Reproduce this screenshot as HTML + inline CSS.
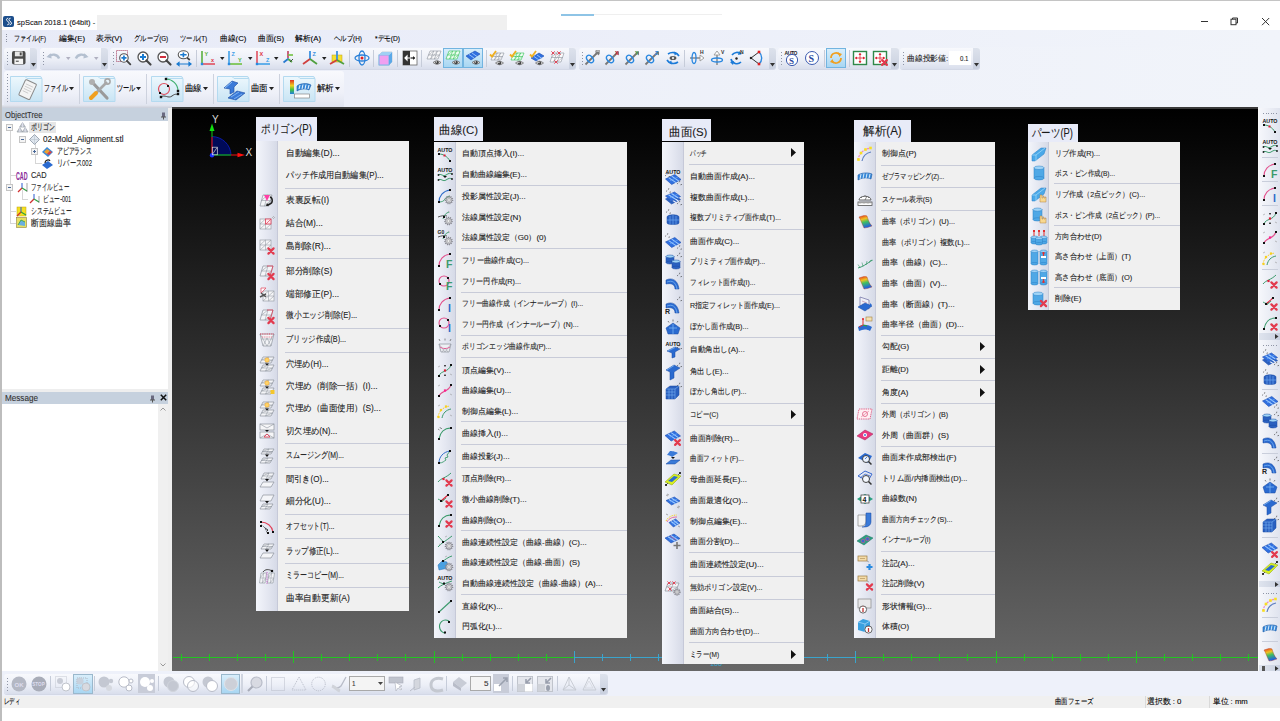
<!DOCTYPE html>
<html><head><meta charset="utf-8"><title>spScan</title>
<style>
*{margin:0;padding:0;box-sizing:border-box}
html,body{width:1280px;height:721px;overflow:hidden;background:#fff;font-family:"Liberation Sans", sans-serif;color:#1a1a1a}
.a{position:absolute}
.t{position:absolute;white-space:nowrap;line-height:1.2;transform-origin:0 50%;color:#000;-webkit-text-stroke:0.1px currentColor}
svg.a{overflow:visible}
</style></head>
<body>
<div class="a" style="left:0px;top:0px;width:1280px;height:721px;background:#fff"></div>
<div class="a" style="left:0px;top:0px;width:1280px;height:1px;background:#c4c4c4"></div>
<div class="a" style="left:0px;top:0px;width:1.5px;height:721px;background:#bdbdbd"></div>
<svg class="a" style="left:3px;top:16px" width="11" height="11" viewBox="0 0 11 11"><rect width="11" height="11" rx="2" fill="#1d4f8c"/><path d="M5.2 2.2C3.6 2.2 3 3.6 4 4.6l1.6 1.6c1 1 .4 2.6-1.3 2.6M7.6 2.2C6 2.2 5.4 3.6 6.4 4.6L8 6.2c1 1 .4 2.6-1.3 2.6" stroke="#fff" stroke-width="1" fill="none"/></svg>
<div class="t" style="left:17px;top:17.5px;font-size:8px;--w:78.17px;color:#111;transform:scaleX(0.9399)">spScan 2018.1 (64bit) -</div>
<div class="a" style="left:97px;top:15px;width:410px;height:15px;background:#f0f0f0"></div>
<div class="a" style="left:561px;top:14px;width:33px;height:1.5px;background:#8ec4e6"></div>
<div class="a" style="left:594px;top:14.2px;width:128px;height:1px;background:#efefef"></div>
<div class="a" style="left:1201px;top:21px;width:7px;height:1px;background:#333"></div>
<svg class="a" style="left:1230px;top:17px" width="9" height="9" viewBox="0 0 9 9"><rect x="1" y="2.2" width="5" height="5.5" fill="none" stroke="#333" stroke-width="1"/><path d="M2.5 2.2V1h5v5H6" fill="none" stroke="#333" stroke-width="1"/></svg>
<svg class="a" style="left:1261px;top:17px" width="9" height="9" viewBox="0 0 9 9"><path d="M1 1l7.2 7.2M8.2 1L1 8.2" stroke="#333" stroke-width="1"/></svg>
<div class="a" style="left:1.5px;top:30px;width:1278.5px;height:17px;background:linear-gradient(90deg,#e8ebf7,#ebeef9 40%,#f1f4fa)"></div>
<div class="a" style="left:6px;top:33.5px;width:1px;height:1px;background:#8a8fa0"></div>
<div class="a" style="left:6px;top:36.0px;width:1px;height:1px;background:#8a8fa0"></div>
<div class="a" style="left:6px;top:38.5px;width:1px;height:1px;background:#8a8fa0"></div>
<div class="a" style="left:6px;top:41.0px;width:1px;height:1px;background:#8a8fa0"></div>
<div class="t" style="left:14px;top:33.7px;font-size:8px;--w:31.92px;;transform:scaleX(0.7561)">ファイル(F)</div>
<div class="t" style="left:58.5px;top:33.7px;font-size:8px;--w:26.02px;;transform:scaleX(0.9756)">編集(E)</div>
<div class="t" style="left:96px;top:33.7px;font-size:8px;--w:26.02px;;transform:scaleX(0.9756)">表示(V)</div>
<div class="t" style="left:133.5px;top:33.7px;font-size:8px;--w:34.22px;;transform:scaleX(0.7855)">グループ(G)</div>
<div class="t" style="left:180px;top:33.7px;font-size:8px;--w:27.12px;;transform:scaleX(0.7925)">ツール(T)</div>
<div class="t" style="left:220px;top:33.7px;font-size:8px;--w:26.44px;;transform:scaleX(0.9753)">曲線(C)</div>
<div class="t" style="left:257.5px;top:33.7px;font-size:8px;--w:26.02px;;transform:scaleX(0.9756)">曲面(S)</div>
<div class="t" style="left:295px;top:33.7px;font-size:8px;--w:26.02px;;transform:scaleX(0.9756)">解析(A)</div>
<div class="t" style="left:333.5px;top:33.7px;font-size:8px;--w:27.96px;;transform:scaleX(0.7964)">ヘルプ(H)</div>
<div class="t" style="left:374.5px;top:33.7px;font-size:8px;--w:25.05px;;transform:scaleX(0.829)">*デモ(D)</div>
<div class="a" style="left:1.5px;top:47px;width:1278.5px;height:61px;background:linear-gradient(90deg,#eaedf8,#edf0f9 40%,#f1f4fa)"></div>
<div class="a" style="left:4px;top:47.5px;width:33px;height:21.5px;background:linear-gradient(#f8f9fd,#eceff7 55%,#d9deec);border-radius:3px;box-shadow:0 1px 0 #d3d8e6"></div>
<div class="a" style="left:7px;top:51.5px;width:1px;height:1px;background:#8f95a6"></div>
<div class="a" style="left:7px;top:54.5px;width:1px;height:1px;background:#8f95a6"></div>
<div class="a" style="left:7px;top:57.5px;width:1px;height:1px;background:#8f95a6"></div>
<div class="a" style="left:7px;top:60.5px;width:1px;height:1px;background:#8f95a6"></div>
<div class="a" style="left:7px;top:63.5px;width:1px;height:1px;background:#8f95a6"></div>
<div class="a" style="left:29.5px;top:47.5px;width:7.5px;height:21.5px;background:linear-gradient(#dde2ec,#c9d0df);border-radius:0 3px 3px 0"></div>
<svg class="a" style="left:30.5px;top:63.0px" width="5" height="4" viewBox="0 0 5 4"><path d="M0 0h5l-2.5 3.5z" fill="#333"/></svg>
<div class="a" style="left:40px;top:47.5px;width:68px;height:21.5px;background:linear-gradient(#f8f9fd,#eceff7 55%,#d9deec);border-radius:3px;box-shadow:0 1px 0 #d3d8e6"></div>
<div class="a" style="left:43px;top:51.5px;width:1px;height:1px;background:#8f95a6"></div>
<div class="a" style="left:43px;top:54.5px;width:1px;height:1px;background:#8f95a6"></div>
<div class="a" style="left:43px;top:57.5px;width:1px;height:1px;background:#8f95a6"></div>
<div class="a" style="left:43px;top:60.5px;width:1px;height:1px;background:#8f95a6"></div>
<div class="a" style="left:43px;top:63.5px;width:1px;height:1px;background:#8f95a6"></div>
<div class="a" style="left:100.5px;top:47.5px;width:7.5px;height:21.5px;background:linear-gradient(#dde2ec,#c9d0df);border-radius:0 3px 3px 0"></div>
<svg class="a" style="left:101.5px;top:63.0px" width="5" height="4" viewBox="0 0 5 4"><path d="M0 0h5l-2.5 3.5z" fill="#333"/></svg>
<div class="a" style="left:110px;top:47.5px;width:466px;height:21.5px;background:linear-gradient(#f8f9fd,#eceff7 55%,#d9deec);border-radius:3px;box-shadow:0 1px 0 #d3d8e6"></div>
<div class="a" style="left:113px;top:51.5px;width:1px;height:1px;background:#8f95a6"></div>
<div class="a" style="left:113px;top:54.5px;width:1px;height:1px;background:#8f95a6"></div>
<div class="a" style="left:113px;top:57.5px;width:1px;height:1px;background:#8f95a6"></div>
<div class="a" style="left:113px;top:60.5px;width:1px;height:1px;background:#8f95a6"></div>
<div class="a" style="left:113px;top:63.5px;width:1px;height:1px;background:#8f95a6"></div>
<div class="a" style="left:568.5px;top:47.5px;width:7.5px;height:21.5px;background:linear-gradient(#dde2ec,#c9d0df);border-radius:0 3px 3px 0"></div>
<svg class="a" style="left:569.5px;top:63.0px" width="5" height="4" viewBox="0 0 5 4"><path d="M0 0h5l-2.5 3.5z" fill="#333"/></svg>
<div class="a" style="left:579px;top:47.5px;width:197px;height:21.5px;background:linear-gradient(#f8f9fd,#eceff7 55%,#d9deec);border-radius:3px;box-shadow:0 1px 0 #d3d8e6"></div>
<div class="a" style="left:582px;top:51.5px;width:1px;height:1px;background:#8f95a6"></div>
<div class="a" style="left:582px;top:54.5px;width:1px;height:1px;background:#8f95a6"></div>
<div class="a" style="left:582px;top:57.5px;width:1px;height:1px;background:#8f95a6"></div>
<div class="a" style="left:582px;top:60.5px;width:1px;height:1px;background:#8f95a6"></div>
<div class="a" style="left:582px;top:63.5px;width:1px;height:1px;background:#8f95a6"></div>
<div class="a" style="left:768.5px;top:47.5px;width:7.5px;height:21.5px;background:linear-gradient(#dde2ec,#c9d0df);border-radius:0 3px 3px 0"></div>
<svg class="a" style="left:769.5px;top:63.0px" width="5" height="4" viewBox="0 0 5 4"><path d="M0 0h5l-2.5 3.5z" fill="#333"/></svg>
<div class="a" style="left:777.5px;top:47.5px;width:121px;height:21.5px;background:linear-gradient(#f8f9fd,#eceff7 55%,#d9deec);border-radius:3px;box-shadow:0 1px 0 #d3d8e6"></div>
<div class="a" style="left:780.5px;top:51.5px;width:1px;height:1px;background:#8f95a6"></div>
<div class="a" style="left:780.5px;top:54.5px;width:1px;height:1px;background:#8f95a6"></div>
<div class="a" style="left:780.5px;top:57.5px;width:1px;height:1px;background:#8f95a6"></div>
<div class="a" style="left:780.5px;top:60.5px;width:1px;height:1px;background:#8f95a6"></div>
<div class="a" style="left:780.5px;top:63.5px;width:1px;height:1px;background:#8f95a6"></div>
<div class="a" style="left:891.0px;top:47.5px;width:7.5px;height:21.5px;background:linear-gradient(#dde2ec,#c9d0df);border-radius:0 3px 3px 0"></div>
<svg class="a" style="left:892.0px;top:63.0px" width="5" height="4" viewBox="0 0 5 4"><path d="M0 0h5l-2.5 3.5z" fill="#333"/></svg>
<div class="a" style="left:900px;top:47.5px;width:80px;height:21.5px;background:linear-gradient(#f8f9fd,#eceff7 55%,#d9deec);border-radius:3px;box-shadow:0 1px 0 #d3d8e6"></div>
<div class="a" style="left:903px;top:51.5px;width:1px;height:1px;background:#8f95a6"></div>
<div class="a" style="left:903px;top:54.5px;width:1px;height:1px;background:#8f95a6"></div>
<div class="a" style="left:903px;top:57.5px;width:1px;height:1px;background:#8f95a6"></div>
<div class="a" style="left:903px;top:60.5px;width:1px;height:1px;background:#8f95a6"></div>
<div class="a" style="left:903px;top:63.5px;width:1px;height:1px;background:#8f95a6"></div>
<div class="a" style="left:972.5px;top:47.5px;width:7.5px;height:21.5px;background:linear-gradient(#dde2ec,#c9d0df);border-radius:0 3px 3px 0"></div>
<svg class="a" style="left:973.5px;top:63.0px" width="5" height="4" viewBox="0 0 5 4"><path d="M0 0h5l-2.5 3.5z" fill="#333"/></svg>
<div class="a" style="left:4px;top:70.5px;width:340px;height:37px;background:linear-gradient(#f8f9fd,#eef0f8 60%,#dfe3ef);border-radius:3px"></div>
<div class="a" style="left:6.5px;top:74px;width:1px;height:1px;background:#8f95a6"></div>
<div class="a" style="left:6.5px;top:77px;width:1px;height:1px;background:#8f95a6"></div>
<div class="a" style="left:6.5px;top:80px;width:1px;height:1px;background:#8f95a6"></div>
<div class="a" style="left:6.5px;top:83px;width:1px;height:1px;background:#8f95a6"></div>
<div class="a" style="left:6.5px;top:86px;width:1px;height:1px;background:#8f95a6"></div>
<div class="a" style="left:6.5px;top:89px;width:1px;height:1px;background:#8f95a6"></div>
<div class="a" style="left:6.5px;top:92px;width:1px;height:1px;background:#8f95a6"></div>
<div class="a" style="left:6.5px;top:95px;width:1px;height:1px;background:#8f95a6"></div>
<div class="a" style="left:6.5px;top:98px;width:1px;height:1px;background:#8f95a6"></div>
<div class="a" style="left:6.5px;top:101px;width:1px;height:1px;background:#8f95a6"></div>
<div class="a" style="left:79px;top:74px;width:1px;height:30px;background:#cdd2de"></div>
<div class="a" style="left:146px;top:74px;width:1px;height:30px;background:#cdd2de"></div>
<div class="a" style="left:212.5px;top:74px;width:1px;height:30px;background:#cdd2de"></div>
<div class="a" style="left:279px;top:74px;width:1px;height:30px;background:#cdd2de"></div>
<div class="a" style="left:10px;top:76px;width:32px;height:26px;background:linear-gradient(#e9f5fc,#cfe7f6);border:1px solid #b2d9f0;border-radius:2px"></div>
<div class="t" style="left:44px;top:83.4px;font-size:8.5px;--w:23.71px;;transform:scaleX(0.6586)">ファイル</div>
<svg class="a" style="left:68.72px;top:87px" width="5" height="3.5" viewBox="0 0 5 3.5"><path d="M0 0h5l-2.5 3.2z" fill="#222"/></svg>
<div class="a" style="left:82.5px;top:76px;width:32px;height:26px;background:linear-gradient(#e9f5fc,#cfe7f6);border:1px solid #b2d9f0;border-radius:2px"></div>
<div class="t" style="left:116.5px;top:83.4px;font-size:8.5px;--w:18.61px;;transform:scaleX(0.6893)">ツール</div>
<svg class="a" style="left:136.12px;top:87px" width="5" height="3.5" viewBox="0 0 5 3.5"><path d="M0 0h5l-2.5 3.2z" fill="#222"/></svg>
<div class="a" style="left:151px;top:76px;width:32px;height:26px;background:linear-gradient(#e9f5fc,#cfe7f6);border:1px solid #b2d9f0;border-radius:2px"></div>
<div class="t" style="left:185px;top:83.4px;font-size:8.5px;--w:17.0px;;transform:scaleX(0.9444)">曲線</div>
<svg class="a" style="left:203.0px;top:87px" width="5" height="3.5" viewBox="0 0 5 3.5"><path d="M0 0h5l-2.5 3.2z" fill="#222"/></svg>
<div class="a" style="left:217px;top:76px;width:32px;height:26px;background:linear-gradient(#e9f5fc,#cfe7f6);border:1px solid #b2d9f0;border-radius:2px"></div>
<div class="t" style="left:251px;top:83.4px;font-size:8.5px;--w:17.0px;;transform:scaleX(0.9444)">曲面</div>
<svg class="a" style="left:269.0px;top:87px" width="5" height="3.5" viewBox="0 0 5 3.5"><path d="M0 0h5l-2.5 3.2z" fill="#222"/></svg>
<div class="a" style="left:282.5px;top:76px;width:32px;height:26px;background:linear-gradient(#e9f5fc,#cfe7f6);border:1px solid #b2d9f0;border-radius:2px"></div>
<div class="t" style="left:316.5px;top:83.4px;font-size:8.5px;--w:17.0px;;transform:scaleX(0.9444)">解析</div>
<svg class="a" style="left:334.5px;top:87px" width="5" height="3.5" viewBox="0 0 5 3.5"><path d="M0 0h5l-2.5 3.2z" fill="#222"/></svg>
<div class="a" style="left:1.5px;top:105px;width:170.5px;height:3px;background:linear-gradient(#e4e7f0,#c9cdd8)"></div>
<div class="a" style="left:172px;top:107px;width:1086px;height:2px;background:#3a3a3a"></div>
<div class="a" style="left:1.5px;top:108px;width:166.5px;height:564px;background:#fff"></div>
<div class="a" style="left:168px;top:108px;width:4px;height:564px;background:#eeeeee"></div>
<div class="a" style="left:1.5px;top:108px;width:166.5px;height:13px;background:#c6d1de"></div>
<div class="t" style="left:4.5px;top:109.6px;font-size:9px;--w:37.5px;color:#333;transform:scaleX(0.8487)">ObjectTree</div>
<svg class="a" style="left:160.5px;top:111.5px" width="5" height="8" viewBox="0 0 5 8"><rect x="1" y="0.5" width="3" height="4.5" fill="#6a6a80"/><rect x="0" y="4.5" width="5" height="1" fill="#555"/><rect x="2" y="5" width="1" height="2.5" fill="#555"/></svg>
<div class="a" style="left:1.5px;top:388.5px;width:166.5px;height:3.5px;background:#eeeeee"></div>
<div class="a" style="left:1.5px;top:392px;width:166.5px;height:12px;background:#c6d1de"></div>
<div class="t" style="left:4.5px;top:392.9px;font-size:9px;--w:33px;color:#333;transform:scaleX(0.9033)">Message</div>
<svg class="a" style="left:149.5px;top:395px" width="5" height="8" viewBox="0 0 5 8"><rect x="1" y="0.5" width="3" height="4.5" fill="#6a6a80"/><rect x="0" y="4.5" width="5" height="1" fill="#555"/><rect x="2" y="5" width="1" height="2.5" fill="#555"/></svg>
<svg class="a" style="left:160px;top:394px" width="7" height="7" viewBox="0 0 7 7"><path d="M0.8 0.8l5.4 5.4M6.2 0.8l-5.4 5.4" stroke="#111" stroke-width="1.5"/></svg>
<div class="a" style="left:158px;top:404px;width:10px;height:268px;background:#f0f0f0"></div>
<svg class="a" style="left:160px;top:407px" width="6" height="4" viewBox="0 0 6 4"><path d="M0.5 3.5L3 1l2.5 2.5" stroke="#999" fill="none"/></svg>
<svg class="a" style="left:160px;top:663px" width="6" height="4" viewBox="0 0 6 4"><path d="M0.5 0.5L3 3l2.5-2.5" stroke="#999" fill="none"/></svg>
<div class="a" style="left:9.5px;top:130px;width:1px;height:93px;background:#d6d6d6"></div>
<div class="a" style="left:9.5px;top:175.4px;width:6px;height:1px;background:#d6d6d6"></div>
<div class="a" style="left:9.5px;top:211px;width:6px;height:1px;background:#d6d6d6"></div>
<div class="a" style="left:9.5px;top:222.7px;width:6px;height:1px;background:#d6d6d6"></div>
<div class="a" style="left:22px;top:142px;width:1px;height:0px;background:#d6d6d6"></div>
<div class="a" style="left:34.5px;top:142px;width:1px;height:21px;background:#d6d6d6"></div>
<div class="a" style="left:34.5px;top:163.2px;width:7px;height:1px;background:#d6d6d6"></div>
<div class="a" style="left:22px;top:190px;width:1px;height:9px;background:#d6d6d6"></div>
<div class="a" style="left:22px;top:198.7px;width:6px;height:1px;background:#d6d6d6"></div>
<svg class="a" style="left:6.0px;top:123.9px" width="7" height="7" viewBox="0 0 7 7"><rect x="0.5" y="0.5" width="6" height="6" fill="#f4f4f4" stroke="#c4c4c4"/><path d="M2 3.5h3" stroke="#4a6a9a"/></svg>
<svg class="a" style="left:18.5px;top:136.0px" width="7" height="7" viewBox="0 0 7 7"><rect x="0.5" y="0.5" width="6" height="6" fill="#f4f4f4" stroke="#c4c4c4"/><path d="M2 3.5h3" stroke="#4a6a9a"/></svg>
<svg class="a" style="left:31.0px;top:148.0px" width="7" height="7" viewBox="0 0 7 7"><rect x="0.5" y="0.5" width="6" height="6" fill="#f4f4f4" stroke="#c4c4c4"/><path d="M2 3.5h3" stroke="#4a6a9a"/><path d="M3.5 2v3" stroke="#4a6a9a"/></svg>
<svg class="a" style="left:6.0px;top:183.5px" width="7" height="7" viewBox="0 0 7 7"><rect x="0.5" y="0.5" width="6" height="6" fill="#f4f4f4" stroke="#c4c4c4"/><path d="M2 3.5h3" stroke="#4a6a9a"/></svg>
<div class="a" style="left:28.8px;top:121.5px;width:27px;height:11px;background:#e6e6e6"></div>
<div class="t" style="left:31px;top:122.04px;font-size:8.6px;--w:24px;color:#222;transform:scaleX(0.6667)">ポリゴン</div>
<div class="t" style="left:43.3px;top:134.34px;font-size:8.6px;--w:80.5px;color:#222;transform:scaleX(0.9467)">02-Mold_Alignment.stl</div>
<div class="t" style="left:56.6px;top:146.34px;font-size:8.6px;--w:35px;color:#222;transform:scaleX(0.6481)">アピアランス</div>
<div class="t" style="left:56.6px;top:158.04px;font-size:8.6px;--w:35px;color:#222;transform:scaleX(0.6952)">リバース002</div>
<div class="t" style="left:31px;top:170.24px;font-size:8.6px;--w:15.6px;color:#222;transform:scaleX(0.8592)">CAD</div>
<div class="t" style="left:31px;top:181.84px;font-size:8.6px;--w:38.4px;color:#222;transform:scaleX(0.6095)">ファイルビュー</div>
<div class="t" style="left:43.3px;top:193.54px;font-size:8.6px;--w:28.1px;color:#222;transform:scaleX(0.6357)">ビュー-001</div>
<div class="t" style="left:31px;top:205.84px;font-size:8.6px;--w:40.7px;color:#222;transform:scaleX(0.646)">システムビュー</div>
<div class="t" style="left:31px;top:217.54px;font-size:8.6px;--w:40px;color:#222;transform:scaleX(0.8889)">断面線曲率</div>
<svg class="a" style="left:16.5px;top:121.5px" width="11" height="11" viewBox="0 0 11 11"><path d="M5.5 0.5l2.8 4.5h-5.6zM2.8 5.5l2.8 4.5H0zM8.2 5.5l2.8 4.5H5.4z" fill="#c8ccd4" stroke="#9aa0a8" stroke-width="0.7"/><path d="M5.5 0.5v4.5M2.8 5.5V10M8.2 5.5V10" stroke="#eef" stroke-width="0.6"/></svg>
<svg class="a" style="left:29px;top:134px" width="11" height="11" viewBox="0 0 11 11"><path d="M5.5 0.5l5 5-5 5-5-5z" fill="#dfe6ee" stroke="#8a96a4" stroke-width="0.8"/><path d="M0.5 5.5h10M5.5 0.5v10" stroke="#b8c2cc" stroke-width="0.6"/></svg>
<svg class="a" style="left:41px;top:146px" width="12" height="11" viewBox="0 0 12 11"><path d="M1 6l5-5 6 5-5 5z" fill="#3a8ad8"/><path d="M3 6l3-3 3 2-3 3z" fill="#f0a030"/><path d="M6 8l3-3 2 1-3 3z" fill="#e04040"/></svg>
<svg class="a" style="left:41px;top:157.5px" width="12" height="11" viewBox="0 0 12 11"><path d="M1 7l6-4 5 4-6 4z" fill="#2a6ad0"/><path d="M4 5c0-3 4-4 5-2" stroke="#222" stroke-width="1.2" fill="none"/></svg>
<div class="t" style="left:15.8px;top:169.5px;font-size:10.5px;--w:11.5px;color:#8a2a9a;font-weight:bold;transform:scaleX(0.5055)">CAD</div>
<svg class="a" style="left:17px;top:181.5px" width="11" height="11" viewBox="0 0 11 11"><path d="M5 6v-5" stroke="#2a5ad0" stroke-width="1"/><path d="M5 6l-4 4" stroke="#d03030" stroke-width="1.2"/><path d="M5 6l5 3" stroke="#30a040" stroke-width="1.2"/><path d="M10 1v9" stroke="#666" stroke-width="0.6"/></svg>
<svg class="a" style="left:29px;top:193px" width="11" height="11" viewBox="0 0 11 11"><path d="M5 6v-5" stroke="#2a5ad0" stroke-width="1"/><path d="M5 6l-4 4" stroke="#d03030" stroke-width="1.2"/><path d="M5 6l5 3" stroke="#30a040" stroke-width="1.2"/><path d="M10 3v7" stroke="#666" stroke-width="0.6"/></svg>
<svg class="a" style="left:16px;top:205.5px" width="11" height="11" viewBox="0 0 11 11"><rect x="1" y="1" width="9" height="9" fill="#f4e020" stroke="#c0a010" stroke-width="0.5"/><path d="M5 6v-5" stroke="#2a5ad0" stroke-width="1"/><path d="M5 6l-4 4" stroke="#d03030" stroke-width="1.2"/><path d="M5 6l5 3" stroke="#30a040" stroke-width="1.2"/></svg>
<svg class="a" style="left:16px;top:217px" width="11" height="11" viewBox="0 0 11 11"><rect x="0.5" y="0.5" width="10" height="10" fill="#e8e060" stroke="#908040" stroke-width="0.6"/><path d="M2 8l3-5 4 2v4z" fill="#6ab0e0"/><path d="M2 8l3-5 4 2" stroke="#30a040" stroke-width="0.8" fill="none"/></svg>
<div class="a" style="left:172px;top:109px;width:1086px;height:562px;background:linear-gradient(#000 0%,#676767 100%)"></div>
<svg class="a" style="left:200px;top:110px" width="60" height="52" viewBox="0 0 60 52"><path d="M12 45 L12 26.6 A19 19 0 0 1 31 45 Z" fill="#000a58" stroke="#0a1aa8" stroke-width="1"/><path d="M12 45V27" stroke="#c01010" stroke-width="1.3"/><path d="M12 27V20" stroke="#10a010" stroke-width="1.3"/><path d="M9.5 21L12 13.5L14.5 21z" fill="#10e010"/><path d="M12 45H31" stroke="#10a010" stroke-width="1.3"/><path d="M31 45H38" stroke="#c01010" stroke-width="1.3"/><path d="M37.5 42.8L45 45L37.5 47.2z" fill="#ff1010"/><circle cx="12" cy="45.3" r="2.2" fill="#1a30ff"/><rect x="12.3" y="37.2" width="5" height="7.6" fill="none" stroke="#ddd" stroke-width="0.7"/><path d="M13 43.5l3.8-5.6" stroke="#ddd" stroke-width="0.7"/><text x="12" y="12.6" font-family="Liberation Sans" font-size="10" fill="#d8d8d8">Y</text><text x="45.5" y="45.8" font-family="Liberation Sans" font-size="10" fill="#d8d8d8">X</text></svg>
<div class="a" style="left:172.8px;top:656.8px;width:401.2px;height:1.3px;background:#22c422"></div>
<div class="a" style="left:574px;top:656.8px;width:281px;height:1.3px;background:#3aa4cc"></div>
<div class="a" style="left:855px;top:656.8px;width:403px;height:1.3px;background:#22c422"></div>
<div class="a" style="left:180.5px;top:654px;width:1.2px;height:6.5px;background:#22c422"></div>
<div class="a" style="left:208.5px;top:654px;width:1.2px;height:6.5px;background:#22c422"></div>
<div class="a" style="left:236.5px;top:654px;width:1.2px;height:6.5px;background:#22c422"></div>
<div class="a" style="left:264.5px;top:654px;width:1.2px;height:6.5px;background:#22c422"></div>
<div class="a" style="left:292.5px;top:651px;width:1.2px;height:12px;background:#22c422"></div>
<div class="a" style="left:320.5px;top:654px;width:1.2px;height:6.5px;background:#22c422"></div>
<div class="a" style="left:348.5px;top:654px;width:1.2px;height:6.5px;background:#22c422"></div>
<div class="a" style="left:376.5px;top:654px;width:1.2px;height:6.5px;background:#22c422"></div>
<div class="a" style="left:404.5px;top:654px;width:1.2px;height:6.5px;background:#22c422"></div>
<div class="a" style="left:433.5px;top:651px;width:1.2px;height:12px;background:#22c422"></div>
<div class="a" style="left:461.5px;top:654px;width:1.2px;height:6.5px;background:#22c422"></div>
<div class="a" style="left:489.5px;top:654px;width:1.2px;height:6.5px;background:#22c422"></div>
<div class="a" style="left:517.5px;top:654px;width:1.2px;height:6.5px;background:#22c422"></div>
<div class="a" style="left:545.5px;top:654px;width:1.2px;height:6.5px;background:#22c422"></div>
<div class="a" style="left:573.5px;top:651px;width:1.2px;height:12px;background:#3aa4cc"></div>
<div class="a" style="left:601.5px;top:654px;width:1.2px;height:6.5px;background:#3aa4cc"></div>
<div class="a" style="left:629.5px;top:654px;width:1.2px;height:6.5px;background:#3aa4cc"></div>
<div class="a" style="left:657.5px;top:654px;width:1.2px;height:6.5px;background:#3aa4cc"></div>
<div class="a" style="left:685.5px;top:654px;width:1.2px;height:6.5px;background:#3aa4cc"></div>
<div class="a" style="left:713.5px;top:651px;width:1.2px;height:12px;background:#3aa4cc"></div>
<div class="a" style="left:742.5px;top:654px;width:1.2px;height:6.5px;background:#3aa4cc"></div>
<div class="a" style="left:770.5px;top:654px;width:1.2px;height:6.5px;background:#3aa4cc"></div>
<div class="a" style="left:798.5px;top:654px;width:1.2px;height:6.5px;background:#3aa4cc"></div>
<div class="a" style="left:826.5px;top:654px;width:1.2px;height:6.5px;background:#3aa4cc"></div>
<div class="a" style="left:854.5px;top:651px;width:1.2px;height:12px;background:#3aa4cc"></div>
<div class="a" style="left:882.5px;top:654px;width:1.2px;height:6.5px;background:#22c422"></div>
<div class="a" style="left:910.5px;top:654px;width:1.2px;height:6.5px;background:#22c422"></div>
<div class="a" style="left:938.5px;top:654px;width:1.2px;height:6.5px;background:#22c422"></div>
<div class="a" style="left:966.5px;top:654px;width:1.2px;height:6.5px;background:#22c422"></div>
<div class="a" style="left:995.5px;top:651px;width:1.2px;height:12px;background:#22c422"></div>
<div class="a" style="left:1023.5px;top:654px;width:1.2px;height:6.5px;background:#22c422"></div>
<div class="a" style="left:1051.5px;top:654px;width:1.2px;height:6.5px;background:#22c422"></div>
<div class="a" style="left:1079.5px;top:654px;width:1.2px;height:6.5px;background:#22c422"></div>
<div class="a" style="left:1107.5px;top:654px;width:1.2px;height:6.5px;background:#22c422"></div>
<div class="a" style="left:1135.5px;top:651px;width:1.2px;height:12px;background:#22c422"></div>
<div class="a" style="left:1163.5px;top:654px;width:1.2px;height:6.5px;background:#22c422"></div>
<div class="a" style="left:1191.5px;top:654px;width:1.2px;height:6.5px;background:#22c422"></div>
<div class="a" style="left:1219.5px;top:654px;width:1.2px;height:6.5px;background:#22c422"></div>
<div class="a" style="left:1247.5px;top:654px;width:1.2px;height:6.5px;background:#22c422"></div>
<div class="t" style="left:710px;top:659.8px;font-size:7px;--w:12px;color:#3aa4cc;transform:scaleX(1.0267)">100</div>
<svg class="a" style="left:11px;top:50px" width="15.5" height="15.5" viewBox="0 0 15.5 15.5"><g transform="scale(0.96875)"><rect x="1" y="1" width="14" height="14" rx="2" fill="#4a4a4a"/><rect x="4" y="1.5" width="8" height="5" fill="#e8e8e8"/><rect x="9" y="2.5" width="2" height="3" fill="#4a4a4a"/><rect x="3.5" y="9" width="9" height="5.5" fill="#f4f4f4"/><rect x="5" y="11" width="3" height="1.2" fill="#555"/></g></svg>
<svg class="a" style="left:46px;top:50px" width="15" height="15" viewBox="0 0 15 15"><g transform="scale(0.9375)"><path d="M3 7c3-3 9-3 11 2" stroke="#b4c0d0" stroke-width="2.6" fill="none"/><path d="M0.5 7.5L5 3.5 6 9z" fill="#b4c0d0"/></g></svg>
<svg class="a" style="left:66px;top:57px" width="4.5" height="3" viewBox="0 0 4.5 3"><path d="M0 0h4.5l-2.25 3z" fill="#b0b0c0"/></svg>
<svg class="a" style="left:74px;top:50px" width="15" height="15" viewBox="0 0 15 15"><g transform="scale(0.9375)"><path d="M13 7c-3-3-9-3-11 2" stroke="#b4c0d0" stroke-width="2.6" fill="none"/><path d="M15.5 7.5L11 3.5 10 9z" fill="#b4c0d0"/></g></svg>
<svg class="a" style="left:94px;top:57px" width="4.5" height="3" viewBox="0 0 4.5 3"><path d="M0 0h4.5l-2.25 3z" fill="#b0b0c0"/></svg>
<svg class="a" style="left:116px;top:50px" width="16" height="16" viewBox="0 0 16 16"><g transform="scale(1.0)"><rect x="0.5" y="0.5" width="11" height="11" fill="none" stroke="#a03050" stroke-width="0.8" stroke-dasharray="1.2 0.8"/><g transform="translate(2 2) scale(0.85)"><circle cx="7" cy="7" r="5" fill="#fff" stroke="#555" stroke-width="1.3"/><path d="M10.5 10.5l4 4" stroke="#444" stroke-width="2.2" stroke-linecap="round"/><path d="M7 4v6M4 7h6" stroke="#1a7ad0" stroke-width="2"/></g></g></svg>
<svg class="a" style="left:136px;top:50px" width="16" height="16" viewBox="0 0 16 16"><g transform="scale(1.0)"><circle cx="7" cy="7" r="5" fill="#fff" stroke="#555" stroke-width="1.3"/><path d="M10.5 10.5l4 4" stroke="#444" stroke-width="2.2" stroke-linecap="round"/><path d="M7 4v6M4 7h6" stroke="#1a7ad0" stroke-width="2"/></g></svg>
<svg class="a" style="left:156px;top:50px" width="16" height="16" viewBox="0 0 16 16"><g transform="scale(1.0)"><circle cx="7" cy="7" r="5" fill="#fff" stroke="#555" stroke-width="1.3"/><path d="M10.5 10.5l4 4" stroke="#444" stroke-width="2.2" stroke-linecap="round"/><path d="M4 7h6" stroke="#d03040" stroke-width="2"/></g></svg>
<svg class="a" style="left:175.5px;top:50px" width="16" height="16" viewBox="0 0 16 16"><g transform="scale(1.0)"><g transform="translate(1 0) scale(0.8)"><ellipse cx="8" cy="6" rx="6.5" ry="5" fill="#fff" stroke="#555" stroke-width="1.3"/><path d="M12.5 9.5l3.5 3" stroke="#444" stroke-width="2.2"/><path d="M8 3v6M4 6h8" stroke="#1a7ad0" stroke-width="2"/></g><path d="M1 14h14M1 14l2-1.5v3zM15 14l-2-1.5v3z" stroke="#1a7ad0" stroke-width="1.2" fill="#1a7ad0"/></g></svg>
<div class="a" style="left:195.5px;top:50px;width:1px;height:17px;background:#c6ccd9"></div>
<svg class="a" style="left:199.5px;top:50px" width="16" height="16" viewBox="0 0 16 16"><g transform="scale(1.0)"><path d="M2 1v13" stroke="#5ab040" stroke-width="1.6"/><path d="M2 14h13" stroke="#e05060" stroke-width="1.6"/><rect x="0.8" y="12.8" width="2.4" height="2.4" fill="#2a8ae0"/><text x="4.5" y="6" font-family="Liberation Sans" font-size="5.5" font-weight="bold" fill="#5ab040">Y</text><text x="11" y="12" font-family="Liberation Sans" font-size="5.5" font-weight="bold" fill="#e03040">x</text></g></svg>
<svg class="a" style="left:220px;top:57px" width="4.5" height="3" viewBox="0 0 4.5 3"><path d="M0 0h4.5l-2.25 3z" fill="#222"/></svg>
<svg class="a" style="left:227px;top:50px" width="16" height="16" viewBox="0 0 16 16"><g transform="scale(1.0)"><path d="M2 1v13" stroke="#40a0e8" stroke-width="1.6"/><path d="M2 14h13" stroke="#70c040" stroke-width="1.6"/><rect x="0.8" y="12.8" width="2.4" height="2.4" fill="#2a8ae0"/><text x="4.5" y="6" font-family="Liberation Sans" font-size="5.5" font-weight="bold" fill="#40a0e8">Z</text><text x="11" y="12" font-family="Liberation Sans" font-size="5.5" font-weight="bold" fill="#50b040">Y</text></g></svg>
<svg class="a" style="left:247.5px;top:57px" width="4.5" height="3" viewBox="0 0 4.5 3"><path d="M0 0h4.5l-2.25 3z" fill="#222"/></svg>
<svg class="a" style="left:254.5px;top:50px" width="16" height="16" viewBox="0 0 16 16"><g transform="scale(1.0)"><path d="M2 1v13" stroke="#e05060" stroke-width="1.6"/><path d="M2 14h13" stroke="#40a0e8" stroke-width="1.6"/><rect x="0.8" y="12.8" width="2.4" height="2.4" fill="#2a8ae0"/><text x="4.5" y="6" font-family="Liberation Sans" font-size="5.5" font-weight="bold" fill="#e03040">X</text><text x="11" y="12" font-family="Liberation Sans" font-size="5.5" font-weight="bold" fill="#40a0e8">Z</text></g></svg>
<svg class="a" style="left:274px;top:57px" width="4.5" height="3" viewBox="0 0 4.5 3"><path d="M0 0h4.5l-2.25 3z" fill="#222"/></svg>
<svg class="a" style="left:282px;top:50px" width="16" height="16" viewBox="0 0 16 16"><g transform="scale(1.0)"><path d="M6 9L2 12M6 9l3 2M6 9V1" stroke="#3a90e0" stroke-width="1.4"/><path d="M6 9L1.5 12.5" stroke="#2a7ad0" stroke-width="1.6"/><path d="M6 9l4 3" stroke="#50b040" stroke-width="1.6"/><path d="M6 1v7" stroke="#e05060" stroke-width="1.6"/><path d="M6 5h5" stroke="#70c040" stroke-width="1.6"/><path d="M8 12l3-3" stroke="#444" stroke-width="1"/></g></svg>
<svg class="a" style="left:302px;top:50px" width="16" height="16" viewBox="0 0 16 16"><g transform="scale(1.0)"><path d="M8 9V1" stroke="#3a90e0" stroke-width="1.8"/><path d="M8 9L1 14" stroke="#d04040" stroke-width="1.8"/><path d="M8 9l7 5" stroke="#50a040" stroke-width="1.8"/><text x="10.5" y="6" font-family="Liberation Sans" font-size="5.5" font-weight="bold" fill="#3a90e0">Z</text></g></svg>
<svg class="a" style="left:322px;top:57px" width="4.5" height="3" viewBox="0 0 4.5 3"><path d="M0 0h4.5l-2.25 3z" fill="#222"/></svg>
<svg class="a" style="left:329px;top:50px" width="16" height="16" viewBox="0 0 16 16"><g transform="scale(1.0)"><rect x="3" y="5" width="10" height="7" fill="#f4e030" stroke="#c0a010" stroke-width="0.5"/><path d="M8 10V1" stroke="#3a90e0" stroke-width="1.8"/><path d="M8 10L1 14" stroke="#d04040" stroke-width="1.8"/><path d="M8 10l7 4" stroke="#50a040" stroke-width="1.8"/></g></svg>
<div class="a" style="left:348.7px;top:50px;width:1px;height:17px;background:#c6ccd9"></div>
<svg class="a" style="left:353.5px;top:50px" width="16" height="16" viewBox="0 0 16 16"><g transform="scale(1.0)"><ellipse cx="8" cy="8" rx="7" ry="3" fill="none" stroke="#2a80d8" stroke-width="1.3"/><ellipse cx="8" cy="8" rx="3" ry="7" fill="none" stroke="#2a80d8" stroke-width="1.3"/><circle cx="8" cy="8" r="1.5" fill="#e02020"/></g></svg>
<div class="a" style="left:372.5px;top:50px;width:1px;height:17px;background:#c6ccd9"></div>
<svg class="a" style="left:377px;top:50px" width="16" height="16" viewBox="0 0 16 16"><g transform="scale(1.0)"><path d="M2 5l3-3h10v10l-3 3H2z" fill="#d8eefa" stroke="#9ab" stroke-width="0.5"/><rect x="2" y="5" width="10" height="10" fill="#f0a0f0" stroke="#7ab8e8" stroke-width="1"/><path d="M12 5l3-3v10l-3 3z" fill="#5aa8e8"/><path d="M2 5l3-3h10l-3 3z" fill="#9fd0f4"/></g></svg>
<div class="a" style="left:397px;top:50px;width:1px;height:17px;background:#c6ccd9"></div>
<svg class="a" style="left:402px;top:50px" width="16" height="16" viewBox="0 0 16 16"><g transform="scale(1.0)"><rect x="1" y="1" width="14" height="14" fill="#fff" stroke="#666" stroke-width="0.8"/><rect x="1" y="1" width="7" height="14" fill="#333"/><path d="M3 8h10M3 8l2-2v4zM13 8l-2-2v4z" stroke="#fff" stroke-width="1.2" fill="#fff"/><path d="M8.5 8h4.5" stroke="#222" stroke-width="1.2"/><path d="M13 8l-2-2v4z" fill="#222"/></g></svg>
<div class="a" style="left:420.6px;top:50px;width:1px;height:17px;background:#c6ccd9"></div>
<svg class="a" style="left:425.5px;top:50px" width="16" height="16" viewBox="0 0 16 16"><g transform="scale(1.0)"><polygon points="4,1 15,1 12,9 1,9" fill="#fbfbfc" stroke="#8c929c" stroke-width="0.6"/><path d="M7.666666666666666 1L4.666666666666666 9" stroke="#8c929c" stroke-width="0.6"/><path d="M11.333333333333332 1L8.333333333333332 9" stroke="#8c929c" stroke-width="0.6"/><path d="M2.5 5.0H13.5" stroke="#8c929c" stroke-width="0.6"/><path d="M2.5 5.0L7.666666666666666 1M4.666666666666666 9L11.333333333333332 1M8.333333333333332 9L13.5 5.0" stroke="#8c929c" stroke-width="0.45"/><path d="M7 12.5Q11 8.9 15 12.5Q11 16.1 7 12.5z" fill="#d8d8d8" stroke="#666" stroke-width="0.7"/><circle cx="11" cy="12.5" r="1.8" fill="#444"/><circle cx="10.4" cy="11.9" r="0.6" fill="#fff"/></g></svg>
<div class="a" style="left:443px;top:48px;width:20px;height:19.5px;background:linear-gradient(#d8eefb,#a8d6f2);border:1px solid #72b4e0"></div>
<div class="a" style="left:463px;top:48px;width:20px;height:19.5px;background:linear-gradient(#d8eefb,#a8d6f2);border:1px solid #72b4e0"></div>
<svg class="a" style="left:445px;top:50px" width="16" height="16" viewBox="0 0 16 16"><g transform="scale(1.0)"><polygon points="4,1 15,1 12,9 1,9" fill="#f0fff4" stroke="#30c050" stroke-width="0.6"/><path d="M7.666666666666666 1L4.666666666666666 9" stroke="#30c050" stroke-width="0.6"/><path d="M11.333333333333332 1L8.333333333333332 9" stroke="#30c050" stroke-width="0.6"/><path d="M2.5 5.0H13.5" stroke="#30c050" stroke-width="0.6"/><path d="M2.5 5.0L7.666666666666666 1M4.666666666666666 9L11.333333333333332 1M8.333333333333332 9L13.5 5.0" stroke="#30c050" stroke-width="0.45"/><path d="M7 12.5Q11 8.9 15 12.5Q11 16.1 7 12.5z" fill="#d8d8d8" stroke="#666" stroke-width="0.7"/><circle cx="11" cy="12.5" r="1.8" fill="#444"/><circle cx="10.4" cy="11.9" r="0.6" fill="#fff"/></g></svg>
<svg class="a" style="left:465px;top:50px" width="16" height="16" viewBox="0 0 16 16"><g transform="scale(1.0)"><polygon points="1,6 10,1 15,4 6,10" fill="#2f6fe0" stroke="#1f4fb0" stroke-width="0.6"/><path d="M4 4.5l5 3.5M7 3l5 3.5" stroke="#9ccaff" stroke-width="0.9"/><path d="M7 12.5Q11 8.9 15 12.5Q11 16.1 7 12.5z" fill="#d8d8d8" stroke="#666" stroke-width="0.7"/><circle cx="11" cy="12.5" r="1.8" fill="#444"/><circle cx="10.4" cy="11.9" r="0.6" fill="#fff"/></g></svg>
<div class="a" style="left:485.5px;top:50px;width:1px;height:17px;background:#c6ccd9"></div>
<svg class="a" style="left:489px;top:50px" width="16" height="16" viewBox="0 0 16 16"><g transform="scale(1.0)"><polygon points="5,3 15,3 12,10 2,10" fill="#fbfbfc" stroke="#8c929c" stroke-width="0.6"/><path d="M8.333333333333332 3L5.333333333333333 10" stroke="#8c929c" stroke-width="0.6"/><path d="M11.666666666666666 3L8.666666666666666 10" stroke="#8c929c" stroke-width="0.6"/><path d="M3.5 6.5H13.5" stroke="#8c929c" stroke-width="0.6"/><path d="M3.5 6.5L8.333333333333334 3M5.333333333333334 10L11.666666666666668 3M8.666666666666668 10L13.5 6.5" stroke="#8c929c" stroke-width="0.45"/><path d="M1 4.5l2 2 4-5.5" stroke="#f0b020" stroke-width="1.8" fill="none"/><path d="M6.5 13Q10.5 9.4 14.5 13Q10.5 16.6 6.5 13z" fill="#d8d8d8" stroke="#666" stroke-width="0.7"/><circle cx="10.5" cy="13" r="1.8" fill="#444"/><circle cx="9.9" cy="12.4" r="0.6" fill="#fff"/></g></svg>
<svg class="a" style="left:509px;top:50px" width="16" height="16" viewBox="0 0 16 16"><g transform="scale(1.0)"><polygon points="5,3 15,3 12,10 2,10" fill="#f0fff4" stroke="#30c050" stroke-width="0.6"/><path d="M8.333333333333332 3L5.333333333333333 10" stroke="#30c050" stroke-width="0.6"/><path d="M11.666666666666666 3L8.666666666666666 10" stroke="#30c050" stroke-width="0.6"/><path d="M3.5 6.5H13.5" stroke="#30c050" stroke-width="0.6"/><path d="M3.5 6.5L8.333333333333334 3M5.333333333333334 10L11.666666666666668 3M8.666666666666668 10L13.5 6.5" stroke="#30c050" stroke-width="0.45"/><path d="M1 4.5l2 2 4-5.5" stroke="#f0b020" stroke-width="1.8" fill="none"/><path d="M6.5 13Q10.5 9.4 14.5 13Q10.5 16.6 6.5 13z" fill="#d8d8d8" stroke="#666" stroke-width="0.7"/><circle cx="10.5" cy="13" r="1.8" fill="#444"/><circle cx="9.9" cy="12.4" r="0.6" fill="#fff"/></g></svg>
<svg class="a" style="left:529px;top:50px" width="16" height="16" viewBox="0 0 16 16"><g transform="scale(1.0)"><polygon points="2,8 10,3 15,6 7,11" fill="#2f6fe0" stroke="#1f4fb0" stroke-width="0.6"/><path d="M5 6.5l5 3.5M8 5l5 3.5" stroke="#9ccaff" stroke-width="0.9"/><path d="M1 4.5l2 2 4-5.5" stroke="#f0b020" stroke-width="1.8" fill="none"/><path d="M6.5 13Q10.5 9.4 14.5 13Q10.5 16.6 6.5 13z" fill="#d8d8d8" stroke="#666" stroke-width="0.7"/><circle cx="10.5" cy="13" r="1.8" fill="#444"/><circle cx="9.9" cy="12.4" r="0.6" fill="#fff"/></g></svg>
<svg class="a" style="left:549px;top:50px" width="16" height="16" viewBox="0 0 16 16"><g transform="scale(1.0)"><polygon points="4,3 15,3 12,12 1,12" fill="#fbfbfc" stroke="#8c929c" stroke-width="0.6"/><path d="M7.666666666666666 3L4.666666666666666 12" stroke="#8c929c" stroke-width="0.6"/><path d="M11.333333333333332 3L8.333333333333332 12" stroke="#8c929c" stroke-width="0.6"/><path d="M2.5 7.5H13.5" stroke="#8c929c" stroke-width="0.6"/><path d="M2.5 7.5L7.666666666666666 3M4.666666666666666 12L11.333333333333332 3M8.333333333333332 12L13.5 7.5" stroke="#8c929c" stroke-width="0.45"/><path d="M2.6 1.6L5.4 4.4M5.4 1.6L2.6 4.4" stroke="#e23a4e" stroke-width="0.9" stroke-linecap="round"/><path d="M8.6 1.6L11.4 4.4M11.4 1.6L8.6 4.4" stroke="#e23a4e" stroke-width="0.9" stroke-linecap="round"/><path d="M5.6 10.6L8.4 13.4M8.4 10.6L5.6 13.4" stroke="#e23a4e" stroke-width="0.9" stroke-linecap="round"/></g></svg>
<svg class="a" style="left:584px;top:50px" width="16" height="16" viewBox="0 0 16 16"><g transform="scale(1.0)"><path d="M1.5 14.5L13 3" stroke="#777" stroke-width="1.8"/><path d="M11 1.5h4v4z" fill="#777"/><ellipse cx="6" cy="9" rx="2.8" ry="4.2" transform="rotate(-40 6 9)" fill="none" stroke="#2a88e0" stroke-width="1.4"/><rect x="12" y="0.5" width="3.5" height="3.5" fill="none" stroke="#777" stroke-width="0.6"/></g></svg>
<svg class="a" style="left:604px;top:50px" width="16" height="16" viewBox="0 0 16 16"><g transform="scale(1.0)"><path d="M1.5 14.5L13 3" stroke="#777" stroke-width="1.8"/><path d="M11 1.5h4v4z" fill="#777"/><ellipse cx="6" cy="9" rx="2.8" ry="4.2" transform="rotate(-40 6 9)" fill="none" stroke="#2a88e0" stroke-width="1.4"/><text x="11" y="5" font-family="Liberation Sans" font-size="5.5" font-weight="bold" fill="#d02030">X</text></g></svg>
<svg class="a" style="left:624px;top:50px" width="16" height="16" viewBox="0 0 16 16"><g transform="scale(1.0)"><path d="M1.5 14.5L13 3" stroke="#777" stroke-width="1.8"/><path d="M11 1.5h4v4z" fill="#777"/><ellipse cx="6" cy="9" rx="2.8" ry="4.2" transform="rotate(-40 6 9)" fill="none" stroke="#2a88e0" stroke-width="1.4"/><text x="11" y="5" font-family="Liberation Sans" font-size="5.5" font-weight="bold" fill="#40a040">Y</text></g></svg>
<svg class="a" style="left:644px;top:50px" width="16" height="16" viewBox="0 0 16 16"><g transform="scale(1.0)"><path d="M1.5 14.5L13 3" stroke="#777" stroke-width="1.8"/><path d="M11 1.5h4v4z" fill="#777"/><ellipse cx="6" cy="9" rx="2.8" ry="4.2" transform="rotate(-40 6 9)" fill="none" stroke="#2a88e0" stroke-width="1.4"/><text x="11" y="5" font-family="Liberation Sans" font-size="5.5" font-weight="bold" fill="#2a88e0">Z</text></g></svg>
<svg class="a" style="left:665px;top:50px" width="16" height="16" viewBox="0 0 16 16"><g transform="scale(1.0)"><path d="M3 4a7 6 0 0 1 11 2M13 12a7 6 0 0 1-11-2" stroke="#1a7ad8" stroke-width="1.6" fill="none"/><path d="M9.5 1.5l3 2-3 2z M6.5 14.5l-3-2 3-2z" fill="#1a7ad8"/><ellipse cx="8" cy="8" rx="3.4" ry="2.1" fill="#555"/><circle cx="8" cy="8" r="1.2" fill="#ddd"/></g></svg>
<div class="a" style="left:684.4px;top:50px;width:1px;height:17px;background:#c6ccd9"></div>
<svg class="a" style="left:688.5px;top:50px" width="16" height="16" viewBox="0 0 16 16"><g transform="scale(1.0)"><path d="M1 8h11" stroke="#999" stroke-width="1.8"/><path d="M11 5l4 3-4 3z" fill="#fff" stroke="#999" stroke-width="0.9"/><ellipse cx="5" cy="8" rx="2" ry="5.5" fill="none" stroke="#2a88e0" stroke-width="1.3"/><text x="11" y="4" font-family="Liberation Sans" font-size="5" font-weight="bold" fill="#333">H</text></g></svg>
<svg class="a" style="left:709.5px;top:50px" width="16" height="16" viewBox="0 0 16 16"><g transform="scale(1.0)"><path d="M7 15V4" stroke="#999" stroke-width="1.8"/><path d="M4 5l3-4 3 4z" fill="#fff" stroke="#999" stroke-width="0.9"/><ellipse cx="7" cy="10" rx="5.5" ry="2" fill="none" stroke="#2a88e0" stroke-width="1.3"/><text x="11" y="4" font-family="Liberation Sans" font-size="5" font-weight="bold" fill="#333">V</text></g></svg>
<svg class="a" style="left:729px;top:50px" width="16" height="16" viewBox="0 0 16 16"><g transform="scale(1.0)"><path d="M3 5a6 6 0 0 1 9-1M12 12a6 6 0 0 1-10-3" stroke="#1a7ad8" stroke-width="1.6" fill="none"/><path d="M10 1l3 3-4 1z M4 15l-3-3 4-1z" fill="#1a7ad8"/><circle cx="7.5" cy="8.5" r="1.2" fill="#222"/><text x="11" y="4" font-family="Liberation Sans" font-size="5" font-weight="bold" fill="#333">N</text></g></svg>
<svg class="a" style="left:750px;top:50px" width="16" height="16" viewBox="0 0 16 16"><g transform="scale(1.0)"><path d="M1 8L9 2M1 8l8 6" stroke="#333" stroke-width="1"/><path d="M9 2a8 8 0 0 1 0 12" stroke="#2a88e0" stroke-width="1.4" fill="none"/><rect x="-0.10000000000000009" y="6.9" width="2.2" height="2.2" fill="#222"/><rect x="7.7" y="0.7" width="2.6" height="2.6" fill="#e02020"/><rect x="7.7" y="12.7" width="2.6" height="2.6" fill="#e02020"/></g></svg>
<svg class="a" style="left:784px;top:50px" width="16" height="16" viewBox="0 0 16 16"><g transform="scale(1.0)"><text x="0.5" y="4.8" font-family="Liberation Sans" font-size="5" font-weight="bold" fill="#222" textLength="13">AUTO</text><circle cx="8" cy="10" r="5.6" fill="#fff" stroke="#3a5ab0" stroke-width="1"/><text x="5" y="13.5" font-family="Liberation Serif" font-size="9" font-weight="bold" fill="#2a4aa0">S</text></g></svg>
<svg class="a" style="left:804px;top:50px" width="16" height="16" viewBox="0 0 16 16"><g transform="scale(1.0)"><circle cx="8" cy="8" r="6.5" fill="#fff" stroke="#3a5ab0" stroke-width="1"/><text x="4.6" y="12" font-family="Liberation Serif" font-size="10" font-weight="bold" fill="#2a4aa0">S</text></g></svg>
<div class="a" style="left:823.7px;top:50px;width:1px;height:17px;background:#c6ccd9"></div>
<div class="a" style="left:825.5px;top:48px;width:20.5px;height:19.5px;background:linear-gradient(#d8eefb,#a8d6f2);border:1px solid #72b4e0"></div>
<svg class="a" style="left:828px;top:50px" width="16" height="16" viewBox="0 0 16 16"><g transform="scale(1.0)"><path d="M3 8a5 5 0 0 1 9-3M13 8a5 5 0 0 1-9 3" stroke="#f0a020" stroke-width="1.8" fill="none"/><path d="M10 2.5l4 1.5-2.5 3z M6 13.5l-4-1.5 2.5-3z" fill="#f0a020"/></g></svg>
<div class="a" style="left:849px;top:50px;width:1px;height:17px;background:#c6ccd9"></div>
<svg class="a" style="left:851.5px;top:50px" width="16" height="16" viewBox="0 0 16 16"><g transform="scale(1.0)"><rect x="1.5" y="1.5" width="13" height="13" fill="#fff" stroke="#30884a" stroke-width="1.4"/><path d="M8 3v10M3 8h10" stroke="#e02030" stroke-width="0.8"/><path d="M8 3l-1.5 2h3zM8 13l-1.5-2h3zM3 8l2-1.5v3zM13 8l-2-1.5v3z" fill="#e02030"/></g></svg>
<svg class="a" style="left:872px;top:50px" width="16" height="16" viewBox="0 0 16 16"><g transform="scale(1.0)"><rect x="1.5" y="1.5" width="13" height="13" fill="#fff" stroke="#30884a" stroke-width="1.4"/><path d="M8 3v10M3 8h10" stroke="#e02030" stroke-width="0.8"/><path d="M8 3l-1.5 2h3zM8 13l-1.5-2h3zM3 8l2-1.5v3zM13 8l-2-1.5v3z" fill="#e02030"/><path d="M10.1 10.1L14.9 14.9M14.9 10.1L10.1 14.9" stroke="#e23a4e" stroke-width="2.2" stroke-linecap="round"/></g></svg>
<div class="t" style="left:906.8px;top:53.7px;font-size:8px;--w:41.2px;color:#222;transform:scaleX(0.9755)">曲線投影値:</div>
<div class="a" style="left:948.5px;top:51px;width:22.5px;height:14px;background:#fff"></div>
<div class="t" style="left:959.5px;top:53.7px;font-size:8px;--w:8.5px;color:#222;transform:scaleX(0.764)">0.1</div>
<svg class="a" style="left:10px;top:76.3px" width="32.5" height="26" viewBox="0 0 32.5 26"><defs><linearGradient id="fg" x1="0" y1="0" x2="0" y2="1"><stop offset="0" stop-color="#eef8fd"/><stop offset="1" stop-color="#c8e4f4"/></linearGradient></defs><path d="M0.5 0.5H15L17 2.5H32V25.5H0.5z" fill="url(#fg)" stroke="#b4daf0" stroke-width="1"/></svg>
<svg class="a" style="left:82.5px;top:76.3px" width="32.5" height="26" viewBox="0 0 32.5 26"><defs><linearGradient id="fg" x1="0" y1="0" x2="0" y2="1"><stop offset="0" stop-color="#eef8fd"/><stop offset="1" stop-color="#c8e4f4"/></linearGradient></defs><path d="M0.5 0.5H15L17 2.5H32V25.5H0.5z" fill="url(#fg)" stroke="#b4daf0" stroke-width="1"/></svg>
<svg class="a" style="left:151px;top:76.3px" width="32.5" height="26" viewBox="0 0 32.5 26"><defs><linearGradient id="fg" x1="0" y1="0" x2="0" y2="1"><stop offset="0" stop-color="#eef8fd"/><stop offset="1" stop-color="#c8e4f4"/></linearGradient></defs><path d="M0.5 0.5H15L17 2.5H32V25.5H0.5z" fill="url(#fg)" stroke="#b4daf0" stroke-width="1"/></svg>
<svg class="a" style="left:217px;top:76.3px" width="32.5" height="26" viewBox="0 0 32.5 26"><defs><linearGradient id="fg" x1="0" y1="0" x2="0" y2="1"><stop offset="0" stop-color="#eef8fd"/><stop offset="1" stop-color="#c8e4f4"/></linearGradient></defs><path d="M0.5 0.5H15L17 2.5H32V25.5H0.5z" fill="url(#fg)" stroke="#b4daf0" stroke-width="1"/></svg>
<svg class="a" style="left:282.5px;top:76.3px" width="32.5" height="26" viewBox="0 0 32.5 26"><defs><linearGradient id="fg" x1="0" y1="0" x2="0" y2="1"><stop offset="0" stop-color="#eef8fd"/><stop offset="1" stop-color="#c8e4f4"/></linearGradient></defs><path d="M0.5 0.5H15L17 2.5H32V25.5H0.5z" fill="url(#fg)" stroke="#b4daf0" stroke-width="1"/></svg>
<svg class="a" style="left:14px;top:79px" width="26" height="24" viewBox="0 0 26 24"><g transform="rotate(25 13 12)"><rect x="7" y="2" width="12" height="17" rx="1" fill="#f4f4f4" stroke="#8a8a8a" stroke-width="1"/><path d="M9 6h8M9 8.5h8M9 11h8M9 13.5h6" stroke="#c8c8c8" stroke-width="0.8"/></g></svg>
<svg class="a" style="left:87px;top:78px" width="26" height="24" viewBox="0 0 26 24"><path d="M5 4l15 16" stroke="#9a9a9a" stroke-width="3.2" stroke-linecap="round"/><path d="M20 4L9 15" stroke="#a8a8a8" stroke-width="2.6"/><circle cx="20.5" cy="3.5" r="2.6" fill="none" stroke="#a8a8a8" stroke-width="1.6"/><circle cx="5" cy="4" r="3" fill="#b0b0b0"/><path d="M9 15l-5 5" stroke="#f0a020" stroke-width="4" stroke-linecap="round"/></svg>
<svg class="a" style="left:153px;top:77px" width="30" height="24" viewBox="0 0 30 24"><circle cx="11" cy="12" r="5.5" fill="none" stroke="#e05060" stroke-width="1.2"/><path d="M13 2c6 0 12 5 12 12" stroke="#40b070" stroke-width="1.2" fill="none"/><path d="M8 20c4-3 7 2 11-1s4-1 6-2" stroke="#444" stroke-width="1" fill="none"/><rect x="11.8" y="0.8" width="2.4" height="2.4" fill="#111"/><rect x="23.8" y="12.8" width="2.4" height="2.4" fill="#111"/><rect x="6.8" y="18.8" width="2.4" height="2.4" fill="#111"/><rect x="23.8" y="15.8" width="2.4" height="2.4" fill="#111"/><rect x="14" y="8" width="2" height="2" fill="#111"/><rect x="6" y="15" width="2" height="2" fill="#111"/></svg>
<svg class="a" style="left:222px;top:78px" width="26" height="24" viewBox="0 0 26 24"><path d="M2 10l8-7 6 2-4 4v5l-4 2V11z" fill="#3a7ad8" stroke="#1b4aa0" stroke-width="0.6"/><path d="M3 10l7-6" stroke="#8abef8" stroke-width="1"/><polygon points="6,20 15,13 23,15 14,22" fill="#3a7ad8" stroke="#1b4aa0" stroke-width="0.6"/><path d="M9 19l8-5M12 21l8-5" stroke="#8abef8" stroke-width="0.8"/></svg>
<svg class="a" style="left:285px;top:78px" width="30" height="24" viewBox="0 0 30 24"><defs><linearGradient id="cb" x1="0" y1="0" x2="0" y2="1"><stop offset="0" stop-color="#e03020"/><stop offset="0.4" stop-color="#f0d020"/><stop offset="0.7" stop-color="#40c040"/><stop offset="1" stop-color="#2080e0"/></linearGradient></defs><rect x="5" y="2" width="4" height="14" fill="url(#cb)"/><path d="M12 8c4-3 10-3 14-1l-2 5c-4-2-9-1-12 1z" fill="#3a8ad8" stroke="#1b5aa8" stroke-width="0.6"/><path d="M15 7l-1 4M18 6.5l-1 4.5M21 6.5l-1 4.5M24 7l-1 4" stroke="#e8f4ff" stroke-width="1"/><rect x="9.5" y="16" width="15" height="4" fill="#fff" stroke="#888" stroke-width="0.7"/></svg>
<div class="a" style="left:1258px;top:108px;width:22px;height:564px;background:linear-gradient(90deg,#f7f8fc,#e9ecf4 60%,#dfe3ee)"></div>
<div class="a" style="left:1258px;top:108px;width:1px;height:564px;background:#fafafa"></div>
<div class="a" style="left:1263.0px;top:112.5px;width:1px;height:1px;background:#8f95a6"></div>
<div class="a" style="left:1265.6px;top:112.5px;width:1px;height:1px;background:#8f95a6"></div>
<div class="a" style="left:1268.2px;top:112.5px;width:1px;height:1px;background:#8f95a6"></div>
<div class="a" style="left:1270.8px;top:112.5px;width:1px;height:1px;background:#8f95a6"></div>
<div class="a" style="left:1273.4px;top:112.5px;width:1px;height:1px;background:#8f95a6"></div>
<div class="a" style="left:1276.0px;top:112.5px;width:1px;height:1px;background:#8f95a6"></div>
<svg class="a" style="left:1262px;top:117px" width="16" height="16" viewBox="0 0 16 16"><text x="0.5" y="5.5" font-family="Liberation Sans" font-size="5.6" font-weight="bold" fill="#111" textLength="15" lengthAdjust="spacingAndGlyphs">AUTO</text><path d="M2 8c4 0 8 2 11 7" stroke="#3b9a6c" stroke-width="1" fill="none"/><rect x="1.0" y="7.0" width="2.0" height="2.0" fill="#111"/><rect x="6.5" y="8.5" width="2" height="2" fill="#e0203a"/><rect x="12.0" y="14.0" width="2.0" height="2.0" fill="#111"/></svg>
<svg class="a" style="left:1262px;top:137.8px" width="16" height="16" viewBox="0 0 16 16"><text x="0.5" y="5.5" font-family="Liberation Sans" font-size="5.6" font-weight="bold" fill="#111" textLength="15" lengthAdjust="spacingAndGlyphs">AUTO</text><path d="M1 9c3-2 5 2 8 0s4-2 6-1M1 14c3-2 5 2 8 0s4-2 6-1" stroke="#3b9a6c" stroke-width="1" fill="none"/><path d="M6 10h4l-2 2z" fill="#111"/><rect x="0.7" y="8.2" width="1.6" height="1.6" fill="#111"/><rect x="14.2" y="7.2" width="1.6" height="1.6" fill="#111"/><rect x="0.7" y="13.2" width="1.6" height="1.6" fill="#111"/><rect x="14.2" y="12.2" width="1.6" height="1.6" fill="#111"/></svg>
<div class="a" style="left:1262px;top:157px;width:16px;height:1px;background:#c9cedb"></div>
<svg class="a" style="left:1262px;top:162px" width="16" height="16" viewBox="0 0 16 16"><path d="M2 14C2 8 6 3 13 2" stroke="#e2508c" stroke-width="1.1" fill="none"/><rect x="1.0" y="13.0" width="2.0" height="2.0" fill="#111"/><rect x="12.0" y="1.0" width="2.0" height="2.0" fill="#111"/><text x="9" y="16" font-family="Liberation Sans" font-size="10.5" font-weight="bold" fill="#3b9a6c">F</text></svg>
<div class="a" style="left:1262px;top:181.3px;width:16px;height:1px;background:#c9cedb"></div>
<svg class="a" style="left:1262px;top:186.2px" width="16" height="16" viewBox="0 0 16 16"><path d="M2 14C2 8 6 3 13 2" stroke="#e2508c" stroke-width="1.1" fill="none"/><rect x="1.0" y="13.0" width="2.0" height="2.0" fill="#111"/><rect x="12.0" y="1.0" width="2.0" height="2.0" fill="#111"/><text x="11" y="16" font-family="Liberation Sans" font-size="10.5" font-weight="bold" fill="#2f6cc8">I</text></svg>
<div class="a" style="left:1262px;top:205px;width:16px;height:1px;background:#c9cedb"></div>
<svg class="a" style="left:1262px;top:210.3px" width="16" height="16" viewBox="0 0 16 16"><path d="M2 14c2-6 9-3 12-11" stroke="#3b9a6c" stroke-width="1" fill="none"/><rect x="1.0" y="13.0" width="2.0" height="2.0" fill="#111"/><rect x="13.0" y="2.0" width="2.0" height="2.0" fill="#111"/><rect x="6.9" y="7.4" width="2.2" height="2.2" fill="#e0203a"/><path d="M8 3v2M8 12v2M7 4l1-1 1 1M7 13l1 1 1-1" stroke="#222" stroke-width="0.7" fill="none"/><path d="M1 5l2-1M13 12l2 1" stroke="#999" stroke-width="0.6"/></svg>
<svg class="a" style="left:1262px;top:228.7px" width="16" height="16" viewBox="0 0 16 16"><path d="M2 14c2-6 9-3 12-11" stroke="#e2508c" stroke-width="1.1" fill="none"/><rect x="1.0" y="13.0" width="2.0" height="2.0" fill="#111"/><rect x="13.0" y="2.0" width="2.0" height="2.0" fill="#111"/><rect x="6.9" y="7.4" width="2.2" height="2.2" fill="#ff2090"/><path d="M1 4l2-1M13 12l2 1" stroke="#999" stroke-width="0.6"/></svg>
<svg class="a" style="left:1262px;top:249.5px" width="16" height="16" viewBox="0 0 16 16"><path d="M1 14C2 8 6 4 13 3" stroke="#f8d020" stroke-width="1" stroke-dasharray="1.5 1" fill="none"/><path d="M5 15c1-5 4-8 9-9" stroke="#3b9a6c" stroke-width="1" fill="none"/><rect x="0.3999999999999999" y="12.9" width="2.2" height="2.2" fill="#f8d020"/><rect x="2.9" y="5.9" width="2.2" height="2.2" fill="#f8d020"/><rect x="7.9" y="2.4" width="2.2" height="2.2" fill="#f8d020"/><path d="M1 3l2-1M13 12l2 1" stroke="#999" stroke-width="0.6"/></svg>
<div class="a" style="left:1262px;top:269.2px;width:16px;height:1px;background:#c9cedb"></div>
<svg class="a" style="left:1262px;top:272.8px" width="16" height="16" viewBox="0 0 16 16"><path d="M1 11c3-4 8-4 13-9" stroke="#3b9a6c" stroke-width="1" fill="none"/><rect x="5.4" y="6.9" width="2.2" height="2.2" fill="#e0203a"/><path d="M9.4 9.4L14.6 14.6M14.6 9.4L9.4 14.6" stroke="#e23a4e" stroke-width="2.2" stroke-linecap="round"/></svg>
<svg class="a" style="left:1262px;top:294.5px" width="16" height="16" viewBox="0 0 16 16"><path d="M1 7c3 2 6 2 8-1M5 10l2-3" stroke="#3b9a6c" stroke-width="0.9" fill="none"/><path d="M4 9l7-6" stroke="#e0203a" stroke-width="1.1"/><rect x="3.0" y="8.0" width="2.0" height="2.0" fill="#111"/><rect x="10.0" y="2.0" width="2.0" height="2.0" fill="#111"/><path d="M9.4 9.4L14.6 14.6M14.6 9.4L9.4 14.6" stroke="#e23a4e" stroke-width="2.2" stroke-linecap="round"/></svg>
<svg class="a" style="left:1262px;top:314.5px" width="16" height="16" viewBox="0 0 16 16"><path d="M2 14C3 8 7 3 14 3" stroke="#3b9a6c" stroke-width="1.1" fill="none"/><rect x="1.0" y="13.0" width="2.0" height="2.0" fill="#111"/><rect x="13.0" y="2.0" width="2.0" height="2.0" fill="#111"/><path d="M9.4 9.4L14.6 14.6M14.6 9.4L9.4 14.6" stroke="#e23a4e" stroke-width="2.2" stroke-linecap="round"/></svg>
<div class="a" style="left:1259px;top:333.3px;width:21px;height:6.7px;background:linear-gradient(90deg,#dfe4ee,#c9d0df)"></div>
<svg class="a" style="left:1275px;top:334.15px" width="4" height="5" viewBox="0 0 4 5"><path d="M0 0v5l3.5-2.5z" fill="#333"/></svg>
<div class="a" style="left:1263.0px;top:344.7px;width:1px;height:1px;background:#8f95a6"></div>
<div class="a" style="left:1265.6px;top:344.7px;width:1px;height:1px;background:#8f95a6"></div>
<div class="a" style="left:1268.2px;top:344.7px;width:1px;height:1px;background:#8f95a6"></div>
<div class="a" style="left:1270.8px;top:344.7px;width:1px;height:1px;background:#8f95a6"></div>
<div class="a" style="left:1273.4px;top:344.7px;width:1px;height:1px;background:#8f95a6"></div>
<div class="a" style="left:1276.0px;top:344.7px;width:1px;height:1px;background:#8f95a6"></div>
<svg class="a" style="left:1262px;top:350.3px" width="16" height="16" viewBox="0 0 16 16"><polygon points="0.5,10.05 9.5,6 15.5,10.5 6.5,15" fill="#2a60c0" stroke="#1f4fb0" stroke-width="0.6"/><path d="M3.5,8.79 L11.0,13.559999999999999 M6.5,7.4399999999999995 L13.4,11.940000000000001" stroke="#e8f0ff" stroke-width="1.1"/><path d="M5.0,11.58 L12.5,8.25" stroke="#6aa8f8" stroke-width="0.7"/><polygon points="0.5,7.05 9.5,3 15.5,7.5 6.5,12" fill="#2f6fe0" stroke="#1f4fb0" stroke-width="0.6"/><path d="M3.5,5.79 L11.0,10.559999999999999 M6.5,4.4399999999999995 L13.4,8.940000000000001" stroke="#9ccaff" stroke-width="1.1"/><path d="M5.0,8.58 L12.5,5.25" stroke="#6aa8f8" stroke-width="0.7"/><path d="M1 2.5l1.2-1M3.5 0.7l0.3-1.5M4.5 3.3l1.5-0.4" stroke="#333" stroke-width="0.6"/><path d="M12 15l1.2-1M14.5 13.2l0.3-1.5M15.5 15.8l1.5-0.4" stroke="#333" stroke-width="0.6"/></svg>
<svg class="a" style="left:1262px;top:369.5px" width="16" height="16" viewBox="0 0 16 16"><path d="M2 7c0-3 12-3 12 0v6c0 2-12 2-12 0z" fill="#2a60c0" stroke="#1b4aa0" stroke-width="0.5"/><path d="M5 6v8M8 5v10M11 6v8M2 10h12" stroke="#6aa6f0" stroke-width="0.7"/><path d="M1 2.5l1.2-1M3.5 0.7l0.3-1.5M4.5 3.3l1.5-0.4" stroke="#333" stroke-width="0.6"/></svg>
<div class="a" style="left:1262px;top:389px;width:16px;height:1px;background:#c9cedb"></div>
<svg class="a" style="left:1262px;top:392.8px" width="16" height="16" viewBox="0 0 16 16"><polygon points="0.5,8.0 9.799999999999999,3.5 16.0,8.5 6.7,13.5" fill="#2f6fe0" stroke="#1f4fb0" stroke-width="0.6"/><path d="M3.6,6.6 L11.35,11.9 M6.7,5.1 L13.83,10.100000000000001" stroke="#9ccaff" stroke-width="1.1"/><path d="M5.1499999999999995,9.7 L12.9,6.0" stroke="#6aa8f8" stroke-width="0.7"/><path d="M0 2.5l1.2-1M2.5 0.7l0.3-1.5M3.5 3.3l1.5-0.4" stroke="#333" stroke-width="0.6"/><path d="M12 14.5l1.2-1M14.5 12.7l0.3-1.5M15.5 15.3l1.5-0.4" stroke="#333" stroke-width="0.6"/></svg>
<svg class="a" style="left:1262px;top:412.8px" width="16" height="16" viewBox="0 0 16 16"><rect x="1" y="2.44" width="8" height="6.12" fill="#2a60c0" stroke="#1b4aa0" stroke-width="0.5"/><ellipse cx="5.0" cy="8.56" rx="4.0" ry="1.44" fill="#2a60c0" stroke="#1b4aa0" stroke-width="0.5"/><ellipse cx="5.0" cy="2.44" rx="4.0" ry="1.44" fill="#9fd4f7" stroke="#1b4aa0" stroke-width="0.5"/><rect x="7" y="7.4399999999999995" width="8" height="6.12" fill="#2a60c0" stroke="#1b4aa0" stroke-width="0.5"/><ellipse cx="11.0" cy="13.56" rx="4.0" ry="1.44" fill="#2a60c0" stroke="#1b4aa0" stroke-width="0.5"/><ellipse cx="11.0" cy="7.4399999999999995" rx="4.0" ry="1.44" fill="#9fd4f7" stroke="#1b4aa0" stroke-width="0.5"/><path d="M12 2l1.2-1M14.5 0.2l0.3-1.5M15.5 2.8l1.5-0.4" stroke="#333" stroke-width="0.6"/></svg>
<svg class="a" style="left:1262px;top:432.8px" width="16" height="16" viewBox="0 0 16 16"><path d="M1 6c6-3 12 0 13 9h-4c0-5-4-6-9-5z" fill="#2a6ad0" stroke="#1b4aa0" stroke-width="0.5"/><path d="M2 8c5-2 9 0 10 7" stroke="#7ab4f4" stroke-width="0.8" fill="none"/><path d="M12 2l1.2-1M14.5 0.2l0.3-1.5M15.5 2.8l1.5-0.4" stroke="#333" stroke-width="0.6"/></svg>
<div class="a" style="left:1262px;top:452.5px;width:16px;height:1px;background:#c9cedb"></div>
<svg class="a" style="left:1262px;top:457.8px" width="16" height="16" viewBox="0 0 16 16"><path d="M1 6c6-3 12 0 13 9h-4c0-5-4-6-9-5z" fill="#2a6ad0" stroke="#1b4aa0" stroke-width="0.5"/><path d="M2 8c5-2 9 0 10 7" stroke="#7ab4f4" stroke-width="0.8" fill="none"/><path d="M12 2l1.2-1M14.5 0.2l0.3-1.5M15.5 2.8l1.5-0.4" stroke="#333" stroke-width="0.6"/><text x="0" y="15.5" font-family="Liberation Sans" font-size="7" font-weight="bold" fill="#222">R</text></svg>
<svg class="a" style="left:1262px;top:477.8px" width="16" height="16" viewBox="0 0 16 16"><path d="M1 9l7-5 7 5-2 6H3z" fill="#2a6ad0" stroke="#1b4aa0" stroke-width="0.5"/><path d="M4 9h8M8 5v10" stroke="#7ab4f4" stroke-width="0.8"/><path d="M3 2l1 1.5M8 0.5v2M13 2l-1 1.5" stroke="#333" stroke-width="0.6"/></svg>
<svg class="a" style="left:1262px;top:497.8px" width="16" height="16" viewBox="0 0 16 16"><path d="M1 7l8-5 6 3-6 4v6l-4 2V9z" fill="#2a6ad0" stroke="#1b4aa0" stroke-width="0.5"/><path d="M2 7l7-4.5" stroke="#7ab4f4" stroke-width="0.8"/><path d="M12 3l1.2-1M14.5 1.2l0.3-1.5M15.5 3.8l1.5-0.4" stroke="#333" stroke-width="0.6"/></svg>
<svg class="a" style="left:1262px;top:517px" width="16" height="16" viewBox="0 0 16 16"><path d="M1 5l4-3h9v9l-4 4H1z" fill="#2a60c0" stroke="#1b4aa0" stroke-width="0.5"/><path d="M4 5v10M7 5v10M1 8h9M1 11h9M10 5v10M1 5h9l4-3" stroke="#7ab4f4" stroke-width="0.6" fill="none"/><path d="M12 2l1.2-1M14.5 0.2l0.3-1.5M15.5 2.8l1.5-0.4" stroke="#333" stroke-width="0.6"/></svg>
<div class="a" style="left:1262px;top:536.7px;width:16px;height:1px;background:#c9cedb"></div>
<svg class="a" style="left:1262px;top:542px" width="16" height="16" viewBox="0 0 16 16"><polygon points="0,5.5 9.299999999999999,1 15.5,6.0 6.2,11" fill="#2f6fe0" stroke="#1f4fb0" stroke-width="0.6"/><path d="M3.1,4.1 L10.85,9.4 M6.2,2.6 L13.33,7.6000000000000005" stroke="#9ccaff" stroke-width="1.1"/><path d="M4.6499999999999995,7.2 L12.4,3.5" stroke="#6aa8f8" stroke-width="0.7"/><path d="M10.1 10.1L14.9 14.9M14.9 10.1L10.1 14.9" stroke="#e23a4e" stroke-width="2.2" stroke-linecap="round"/></svg>
<svg class="a" style="left:1262px;top:559.5px" width="16" height="16" viewBox="0 0 16 16"><polygon points="0,11 9,3 16,5 7,14" fill="#d8f020" stroke="#88a010" stroke-width="0.5"/><polygon points="3,10 9,5 13,6 7,11" fill="#2a6ad0"/><rect x="0.09999999999999998" y="13.1" width="1.8" height="1.8" fill="#111"/><rect x="14.1" y="1.1" width="1.8" height="1.8" fill="#111"/><path d="M1 14l2-2M15 2l-2 2" stroke="#111" stroke-width="0.6"/></svg>
<div class="a" style="left:1259px;top:580.8px;width:21px;height:6.7px;background:linear-gradient(90deg,#dfe4ee,#c9d0df)"></div>
<svg class="a" style="left:1275px;top:581.65px" width="4" height="5" viewBox="0 0 4 5"><path d="M0 0v5l3.5-2.5z" fill="#333"/></svg>
<div class="a" style="left:1263.0px;top:592.5px;width:1px;height:1px;background:#8f95a6"></div>
<div class="a" style="left:1265.6px;top:592.5px;width:1px;height:1px;background:#8f95a6"></div>
<div class="a" style="left:1268.2px;top:592.5px;width:1px;height:1px;background:#8f95a6"></div>
<div class="a" style="left:1270.8px;top:592.5px;width:1px;height:1px;background:#8f95a6"></div>
<div class="a" style="left:1273.4px;top:592.5px;width:1px;height:1px;background:#8f95a6"></div>
<div class="a" style="left:1276.0px;top:592.5px;width:1px;height:1px;background:#8f95a6"></div>
<svg class="a" style="left:1262px;top:597px" width="16" height="16" viewBox="0 0 16 16"><path d="M1 14C2 7 7 3 14 2" stroke="#f080c0" stroke-width="1.2" stroke-dasharray="2 1" fill="none"/><path d="M5 15c1-5 4-8 9-9" stroke="#6080c0" stroke-width="1.2" fill="none"/><rect x="0.19999999999999996" y="12.2" width="2.6" height="2.6" fill="#f8e020"/><rect x="2.7" y="5.7" width="2.6" height="2.6" fill="#f8e020"/><rect x="7.2" y="2.2" width="2.6" height="2.6" fill="#f8e020"/><rect x="12.2" y="0.7" width="2.6" height="2.6" fill="#f8e020"/></svg>
<div class="a" style="left:1262px;top:616.7px;width:16px;height:1px;background:#c9cedb"></div>
<svg class="a" style="left:1262px;top:620.3px" width="16" height="16" viewBox="0 0 16 16"><path d="M1 7c3-2 9-3 14-1l-1 5c-5-2-10-1-13 1z" fill="#3a8ad8" stroke="#1b5aa8" stroke-width="0.6"/><path d="M4 6l-1 5M7 5.5l-1 5M10 5.5l-1 5M13 6l-1 4.5" stroke="#e8f4ff" stroke-width="0.9"/></svg>
<div class="a" style="left:1262px;top:640.8px;width:16px;height:1px;background:#c9cedb"></div>
<svg class="a" style="left:1262px;top:647px" width="16" height="16" viewBox="0 0 16 16"><defs><linearGradient id="rbg" x1="0" y1="0" x2="0.3" y2="1"><stop offset="0" stop-color="#e83020"/><stop offset="0.35" stop-color="#f0c020"/><stop offset="0.6" stop-color="#40c060"/><stop offset="1" stop-color="#2060e0"/></linearGradient></defs><path d="M2 3c3-1 6-2 8-1 1 3 2 7 5 10-3 1-6 2-8 2C5 10 4 6 2 3z" fill="url(#rbg)" stroke="#b04020" stroke-width="0.4"/></svg>
<div class="a" style="left:1259px;top:665px;width:21px;height:6.5px;background:linear-gradient(90deg,#dfe4ee,#c9d0df)"></div>
<svg class="a" style="left:1275px;top:665.75px" width="4" height="5" viewBox="0 0 4 5"><path d="M0 0v5l3.5-2.5z" fill="#333"/></svg>
<svg class="a" style="left:1262px;top:665.75px" width="4" height="5" viewBox="0 0 4 5"><rect x="0" y="0" width="3" height="5" fill="#555"/></svg>
<div class="a" style="left:1.5px;top:671px;width:1278.5px;height:25px;background:#eef1fa"></div>
<div class="a" style="left:4px;top:673.5px;width:603.5px;height:20.5px;background:linear-gradient(#f8f9fd,#eceff7 55%,#d9deec);border-radius:3px;box-shadow:0 1px 0 #d3d8e6"></div>
<div class="a" style="left:7px;top:677.5px;width:1px;height:1px;background:#8f95a6"></div>
<div class="a" style="left:7px;top:680.5px;width:1px;height:1px;background:#8f95a6"></div>
<div class="a" style="left:7px;top:683.5px;width:1px;height:1px;background:#8f95a6"></div>
<div class="a" style="left:7px;top:686.5px;width:1px;height:1px;background:#8f95a6"></div>
<div class="a" style="left:7px;top:689.5px;width:1px;height:1px;background:#8f95a6"></div>
<div class="a" style="left:600.0px;top:673.5px;width:7.5px;height:20.5px;background:linear-gradient(#dde2ec,#c9d0df);border-radius:0 3px 3px 0"></div>
<svg class="a" style="left:601.0px;top:688.0px" width="5" height="4" viewBox="0 0 5 4"><path d="M0 0h5l-2.5 3.5z" fill="#333"/></svg>
<svg class="a" style="left:10.5px;top:675.5px" width="16" height="16" viewBox="0 0 16 16"><circle cx="8" cy="8" r="7.5" fill="#b4b8c4"/><text x="3.5" y="10.5" font-family="Liberation Sans" font-size="6" font-weight="bold" fill="#dde">OK</text></svg>
<svg class="a" style="left:30.5px;top:675.5px" width="16" height="16" viewBox="0 0 16 16"><circle cx="8" cy="8" r="7.5" fill="#a8acb8"/><text x="1.3" y="10" font-family="Liberation Sans" font-size="4.6" font-weight="bold" fill="#dde">STOP</text></svg>
<div class="a" style="left:50px;top:676px;width:1px;height:15px;background:#c6ccd9"></div>
<svg class="a" style="left:55px;top:675.5px" width="16" height="16" viewBox="0 0 16 16"><rect x="0.5" y="0.5" width="11" height="11" fill="none" stroke="#b8bcc8" stroke-width="0.8" stroke-dasharray="1 1"/><circle cx="5" cy="5" r="3" fill="#c8ccd6"/><circle cx="11" cy="11" r="4" fill="#fff" stroke="#c0c4cc"/></svg>
<div class="a" style="left:72.5px;top:673.6px;width:20px;height:20px;background:linear-gradient(#d8eefb,#a8d6f2);border:1px solid #9ab8cc"></div>
<svg class="a" style="left:74.5px;top:676px" width="16" height="16" viewBox="0 0 16 16"><rect x="2" y="2" width="10" height="10" fill="none" stroke="#a8acb8" stroke-width="0.8" stroke-dasharray="1 1"/><circle cx="5" cy="5" r="3.5" fill="#c8ccd6" fill-opacity="0.8"/><circle cx="11" cy="11" r="4" fill="#d8dae0" stroke="#c0c4cc"/></svg>
<div class="a" style="left:94.4px;top:676px;width:1px;height:15px;background:#c6ccd9"></div>
<svg class="a" style="left:98px;top:675.5px" width="16" height="16" viewBox="0 0 16 16"><circle cx="6" cy="6" r="5.5" fill="#c4c8d2"/><circle cx="13" cy="5" r="2.2" fill="#c4c8d2"/><circle cx="11" cy="12" r="3" fill="#d6d9e0"/></svg>
<svg class="a" style="left:118px;top:675.5px" width="16" height="16" viewBox="0 0 16 16"><circle cx="6" cy="6" r="5.2" fill="#fff" stroke="#b8bcc8"/><circle cx="13" cy="5" r="2" fill="#fff" stroke="#b8bcc8"/><circle cx="11" cy="12" r="3" fill="#fff" stroke="#b8bcc8"/></svg>
<div class="a" style="left:138px;top:674px;width:17px;height:19px;background:#c8ccd8"></div>
<svg class="a" style="left:138.5px;top:675.5px" width="16" height="16" viewBox="0 0 16 16"><circle cx="6" cy="6" r="5" fill="#fff"/><circle cx="13" cy="5" r="2" fill="#fff"/><circle cx="11" cy="12" r="3" fill="#fff"/></svg>
<div class="a" style="left:158px;top:676px;width:1px;height:15px;background:#c6ccd9"></div>
<svg class="a" style="left:162.5px;top:675.5px" width="16" height="16" viewBox="0 0 16 16"><circle cx="6" cy="6" r="5.5" fill="#c4c8d2"/><circle cx="10" cy="10" r="5.5" fill="#c4c8d2" stroke="#d0d4dc"/></svg>
<svg class="a" style="left:182.5px;top:675.5px" width="16" height="16" viewBox="0 0 16 16"><circle cx="6" cy="6" r="5.5" fill="#fff" stroke="#b8bcc8"/><circle cx="10" cy="10" r="5.5" fill="#fff" fill-opacity="0.6" stroke="#b8bcc8"/></svg>
<svg class="a" style="left:202px;top:675.5px" width="16" height="16" viewBox="0 0 16 16"><circle cx="6" cy="6" r="5.5" fill="#c4c8d2"/><circle cx="10" cy="10" r="5.5" fill="#fff" stroke="#b8bcc8"/></svg>
<div class="a" style="left:220.6px;top:673.6px;width:19.5px;height:20px;background:linear-gradient(#d8eefb,#a8d6f2);border:1px solid #9ab8cc"></div>
<svg class="a" style="left:222.5px;top:676px" width="16" height="16" viewBox="0 0 16 16"><circle cx="8" cy="8" r="6.5" fill="#cdd0d8" stroke="#dfe2e8"/></svg>
<div class="a" style="left:240.6px;top:674px;width:2.5px;height:19px;background:#d0d5e0"></div>
<svg class="a" style="left:247px;top:675.5px" width="16" height="16" viewBox="0 0 16 16"><circle cx="9.5" cy="6.5" r="5.5" fill="#d8dae2" stroke="#b8bcc8" stroke-width="1.2"/><path d="M5.5 10.5L1 15" stroke="#a8acb8" stroke-width="2.2"/></svg>
<div class="a" style="left:266px;top:676px;width:1px;height:15px;background:#c6ccd9"></div>
<svg class="a" style="left:271px;top:675.5px" width="16" height="16" viewBox="0 0 16 16"><rect x="0.5" y="1.5" width="13" height="13" fill="none" stroke="#b8bcc8" stroke-dasharray="1 1"/></svg>
<svg class="a" style="left:290.6px;top:675.5px" width="16" height="16" viewBox="0 0 16 16"><path d="M8 1L15 14H1z" fill="none" stroke="#b8bcc8" stroke-dasharray="1 1"/></svg>
<svg class="a" style="left:311px;top:675.5px" width="16" height="16" viewBox="0 0 16 16"><circle cx="7.5" cy="8" r="6.8" fill="none" stroke="#b8bcc8" stroke-dasharray="1 1"/></svg>
<svg class="a" style="left:330.5px;top:675.5px" width="16" height="16" viewBox="0 0 16 16"><path d="M2 10c2 2 5 3 8 0l5-9" stroke="#b8bcc8" stroke-width="1.3" fill="none"/><path d="M1 10c3 1 5 4 8 5" stroke="#d0d3da" stroke-width="3"/></svg>
<div class="a" style="left:349.4px;top:676px;width:35.6px;height:15px;background:#f4f4f4;border:1px solid #a9a9a9"></div>
<div class="t" style="left:352px;top:678.7px;font-size:8px;--w:3.5px;color:#333;transform:scaleX(0.786)">1</div>
<svg class="a" style="left:378px;top:682px" width="5" height="3" viewBox="0 0 5 3"><path d="M0 0h5l-2.5 3z" fill="#444"/></svg>
<svg class="a" style="left:387.5px;top:675.5px" width="16" height="16" viewBox="0 0 16 16"><rect x="1" y="1" width="14" height="6" fill="#c0c4ce" stroke="#a8acb8" stroke-width="0.6"/><path d="M7 6l1 9 2-3 3 2 1-1-3-2 3-1z" fill="#fff" stroke="#b0b4c0" stroke-width="0.7"/></svg>
<svg class="a" style="left:408.5px;top:675.5px" width="16" height="16" viewBox="0 0 16 16"><path d="M5 14V4l6-2v10z" fill="#d4d7de" stroke="#b8bcc8" stroke-width="0.8"/><path d="M1 15l5-4" stroke="#b8bcc8" stroke-width="1"/></svg>
<svg class="a" style="left:428.5px;top:675.5px" width="16" height="16" viewBox="0 0 16 16"><path d="M14 3c-6-2-12 0-12 6s6 7 12 5" stroke="#c4c8d0" stroke-width="3" fill="none"/></svg>
<div class="a" style="left:446px;top:676px;width:1px;height:15px;background:#c6ccd9"></div>
<svg class="a" style="left:452px;top:675.5px" width="16" height="16" viewBox="0 0 16 16"><path d="M1 6l6-5 8 6-6 5z" fill="#c8ccd6"/><path d="M1 6v4l8 5v-3z" fill="#b8bcc8"/></svg>
<div class="a" style="left:470px;top:676px;width:20.5px;height:15px;background:#f4f4f4;border:1px solid #a9a9a9"></div>
<div class="t" style="left:483.5px;top:678.7px;font-size:8px;--w:4.5px;color:#333;transform:scaleX(1.0105)">5</div>
<div class="a" style="left:493px;top:674px;width:15.5px;height:19px;background:#c8ccd8"></div>
<svg class="a" style="left:493px;top:675.5px" width="16" height="16" viewBox="0 0 16 16"><rect x="1" y="8" width="7" height="7" fill="#fff"/><path d="M6 10L14 2M10 2h4v4" stroke="#9aa0ae" stroke-width="1.6" fill="none"/></svg>
<div class="a" style="left:512.4px;top:676px;width:1px;height:15px;background:#c6ccd9"></div>
<svg class="a" style="left:517px;top:675.5px" width="16" height="16" viewBox="0 0 16 16"><rect x="0.5" y="0.5" width="15" height="15" fill="#e4e6ec" stroke="#c0c4cc"/><rect x="8" y="8" width="7.5" height="7.5" fill="#fff"/><rect x="0.5" y="8" width="7.5" height="7.5" fill="#d0d3da"/><path d="M14 2L9 7M9 3v4h4" stroke="#9aa0ae" stroke-width="1.6" fill="none"/></svg>
<svg class="a" style="left:537px;top:675.5px" width="16" height="16" viewBox="0 0 16 16"><rect x="0.5" y="0.5" width="15" height="15" fill="#e4e6ec" stroke="#c0c4cc"/><rect x="0.5" y="8" width="7.5" height="7.5" fill="#d0d3da"/><path d="M14 2L9 7M9 3v4h4" stroke="#9aa0ae" stroke-width="1.6" fill="none"/><ellipse cx="11" cy="12" rx="2" ry="3" fill="#9aa0ae"/></svg>
<div class="a" style="left:557px;top:676px;width:1px;height:15px;background:#c6ccd9"></div>
<svg class="a" style="left:562px;top:675.5px" width="16" height="16" viewBox="0 0 16 16"><path d="M7 1L1 14h13z M7 1v8L1 14M7 9l7 5" fill="none" stroke="#c4c8d0" stroke-width="0.9"/></svg>
<svg class="a" style="left:582px;top:675.5px" width="16" height="16" viewBox="0 0 16 16"><path d="M7 1L1 14h13z" fill="none" stroke="#c4c8d0" stroke-width="0.9"/><path d="M7 5L3 12h8z" fill="none" stroke="#d4d7de" stroke-width="0.7"/></svg>
<div class="a" style="left:1.5px;top:696px;width:1278.5px;height:11.5px;background:#f0f0f0"></div>
<div class="t" style="left:4px;top:696.7px;font-size:8px;--w:16.48px;;transform:scaleX(0.6867)">レディ</div>
<div class="t" style="left:1055px;top:696.7px;font-size:8px;--w:38.32px;;transform:scaleX(0.7983)">曲面フェーズ</div>
<div class="a" style="left:1145px;top:696px;width:1px;height:11.5px;background:#d9d9d9"></div>
<div class="t" style="left:1147px;top:696.7px;font-size:8px;--w:34.45px;;transform:scaleX(0.9808)">選択数 : 0</div>
<div class="a" style="left:1208.5px;top:696px;width:1px;height:11.5px;background:#d9d9d9"></div>
<div class="t" style="left:1213px;top:696.7px;font-size:8px;--w:34.8px;;transform:scaleX(0.9667)">単位 : mm</div>
<div class="a" style="left:256px;top:117px;width:61px;height:24px;background:#e8ebf8"></div>
<div class="t" style="left:261px;top:122.48px;font-size:12.2px;--w:50.91px;color:#1a1a1a;transform:scaleX(0.7924)">ポリゴン(P)</div>
<div class="a" style="left:256px;top:141px;width:153px;height:470px;background:#f0f0f0"></div>
<div class="a" style="left:256px;top:141px;width:21.5px;height:470px;background:linear-gradient(90deg,#f3f5fb,#e4e7f1 55%,#d6dae7);border-right:1px solid #c6c9d8"></div>
<div class="t" style="left:285.5px;top:148.42px;font-size:8.8px;--w:53.58px;color:#222;transform:scaleX(0.9646)">自動編集(D)...</div>
<div class="t" style="left:285.5px;top:170.32px;font-size:8.8px;--w:97.65px;color:#222;transform:scaleX(0.8954)">パッチ作成用自動編集(P)...</div>
<div class="a" style="left:284.5px;top:188px;width:124.5px;height:1px;background:#c8cbd8"></div>
<div class="t" style="left:285.5px;top:195.02px;font-size:8.8px;--w:43.01px;color:#222;transform:scaleX(0.9706)">表裏反転(I)</div>
<svg class="a" style="left:259px;top:192.6px" width="16" height="16" viewBox="0 0 16 16"><polygon points="4,2 13,2 10,13 1,13" fill="#f4f5f8" stroke="#8c929c" stroke-width="0.7"/><path d="M2.5 7.5H11.5M8.5 2L5.5 13M2.5 7.5L8.5 2M5.5 13L11.5 7.5" stroke="#8c929c" stroke-width="0.55"/><polygon points="5,2 11,2 8,8" fill="#ff3fa6"/><path d="M11 4c3 1 3 6 0 7l-3 1" stroke="#222" stroke-width="1.5" fill="none"/><path d="M8 10l-1 3 3 0z" fill="#222"/></svg>
<div class="t" style="left:285.5px;top:217.52px;font-size:8.8px;--w:36.89px;color:#222;transform:scaleX(0.9574)">結合(M)...</div>
<svg class="a" style="left:259px;top:215.1px" width="16" height="16" viewBox="0 0 16 16"><rect x="1" y="4" width="11" height="10" fill="#f6f6f8" stroke="#9aa0a8" stroke-width="0.7"/><path d="M6.5 4V14M1 9.0H12M1 9.0L6.5 4M1 14L12 4M6.5 14L12 9.0" stroke="#9aa0a8" stroke-width="0.6"/><rect x="6.5" y="4" width="5.5" height="5" fill="#fde6ea" stroke="#e0425a" stroke-width="0.8"/><path d="M7 9l5-5" stroke="#e0425a" stroke-width="0.7"/><path d="M13 3l2-2M14 4l2-2" stroke="#999" stroke-width="0.6"/></svg>
<div class="a" style="left:284.5px;top:235px;width:124.5px;height:1px;background:#c8cbd8"></div>
<div class="t" style="left:285.5px;top:241.22px;font-size:8.8px;--w:44.78px;color:#222;transform:scaleX(0.962)">島削除(R)...</div>
<svg class="a" style="left:259px;top:238.8px" width="16" height="16" viewBox="0 0 16 16"><rect x="1" y="1" width="11" height="10" fill="#f6f6f8" stroke="#9aa0a8" stroke-width="0.7"/><path d="M6.5 1V11M1 6.0H12M1 6.0L6.5 1M1 11L12 1M6.5 11L12 6.0" stroke="#9aa0a8" stroke-width="0.6"/><path d="M9.4 9.4L14.6 14.6M14.6 9.4L9.4 14.6" stroke="#e23a4e" stroke-width="2.2" stroke-linecap="round"/></svg>
<div class="a" style="left:284.5px;top:258px;width:124.5px;height:1px;background:#c8cbd8"></div>
<div class="t" style="left:285.5px;top:265.92px;font-size:8.8px;--w:46.23px;color:#222;transform:scaleX(0.9685)">部分削除(S)</div>
<svg class="a" style="left:259px;top:263.5px" width="16" height="16" viewBox="0 0 16 16"><polygon points="4,2 14,2 11,12 1,12" fill="#f4f5f8" stroke="#8c929c" stroke-width="0.7"/><path d="M2.5 7.0H12.5M9.0 2L6.0 12M2.5 7.0L9.0 2M6.0 12L12.5 7.0" stroke="#8c929c" stroke-width="0.55"/><path d="M8 2h6l-3 10" stroke="#e0425a" stroke-width="0.8" fill="none"/><path d="M9.4 9.9L14.6 15.1M14.6 9.9L9.4 15.1" stroke="#e23a4e" stroke-width="2.2" stroke-linecap="round"/></svg>
<div class="t" style="left:285.5px;top:288.72px;font-size:8.8px;--w:53.12px;color:#222;transform:scaleX(0.9647)">端部修正(P)...</div>
<svg class="a" style="left:259px;top:286.3px" width="16" height="16" viewBox="0 0 16 16"><rect x="4" y="5" width="11" height="10" fill="#f6f6f8" stroke="#9aa0a8" stroke-width="0.7"/><path d="M9.5 5V15M4 10.0H15M4 10.0L9.5 5M4 15L15 5M9.5 15L15 10.0" stroke="#9aa0a8" stroke-width="0.6"/><path d="M2 2h5l-5 5z" stroke="#e0425a" stroke-width="0.7" fill="#fff"/><path d="M1 11l6-3M2 7l5 4" stroke="#555" stroke-width="1.4"/></svg>
<div class="t" style="left:285.5px;top:310.22px;font-size:8.8px;--w:71.25px;color:#222;transform:scaleX(0.8682)">微小エッジ削除(E)...</div>
<svg class="a" style="left:259px;top:307.8px" width="16" height="16" viewBox="0 0 16 16"><polygon points="4,2 14,2 11,12 1,12" fill="#f4f5f8" stroke="#8c929c" stroke-width="0.7"/><path d="M2.5 7.0H12.5M9.0 2L6.0 12M2.5 7.0L9.0 2M6.0 12L12.5 7.0" stroke="#8c929c" stroke-width="0.55"/><path d="M8 2h6l-3 10" stroke="#e0425a" stroke-width="0.8" fill="none"/><path d="M9.4 9.9L14.6 15.1M14.6 9.9L9.4 15.1" stroke="#e23a4e" stroke-width="2.2" stroke-linecap="round"/></svg>
<div class="a" style="left:284.5px;top:328px;width:124.5px;height:1px;background:#c8cbd8"></div>
<div class="t" style="left:285.5px;top:334.42px;font-size:8.8px;--w:60.07px;color:#222;transform:scaleX(0.8222)">ブリッジ作成(B)...</div>
<svg class="a" style="left:259px;top:332px" width="16" height="16" viewBox="0 0 16 16"><polygon points="1,2 15,2 12,14 4,14" fill="#f4f5f8" stroke="#8c929c" stroke-width="0.7"/><path d="M1 2L8 14L15 2M4 14L8 6L12 14M2.5 7h11" stroke="#8c929c" stroke-width="0.55" fill="none"/><path d="M1 2h14" stroke="#e0425a" stroke-width="1.2" stroke-dasharray="1 0.8"/><path d="M3 5h10" stroke="#e0425a" stroke-width="0.7" stroke-dasharray="1 0.8"/></svg>
<div class="a" style="left:284.5px;top:352px;width:124.5px;height:1px;background:#c8cbd8"></div>
<div class="t" style="left:285.5px;top:358.82px;font-size:8.8px;--w:42.4px;color:#222;transform:scaleX(0.9109)">穴埋め(H)...</div>
<svg class="a" style="left:259px;top:356.4px" width="16" height="16" viewBox="0 0 16 16"><polygon points="4,1 15,1 12,7 1,7" fill="#f4f5f8" stroke="#8c929c" stroke-width="0.7"/><path d="M2.5 4.0H13.5M9.5 1L6.5 7M2.5 4.0L9.5 1M6.5 7L13.5 4.0" stroke="#8c929c" stroke-width="0.55"/><polygon points="4,9 15,9 12,15 1,15" fill="#f4f5f8" stroke="#8c929c" stroke-width="0.7"/><path d="M2.5 12.0H13.5M9.5 9L6.5 15M2.5 12.0L9.5 9M6.5 15L13.5 12.0" stroke="#8c929c" stroke-width="0.55"/><circle cx="8" cy="4" r="2.2" fill="#ffd36a" stroke="#f0a020" stroke-width="0.5"/><path d="M6 7.5h4l-2 2z" fill="#111"/></svg>
<div class="t" style="left:285.5px;top:381.32px;font-size:8.8px;--w:91.53px;color:#222;transform:scaleX(0.9471)">穴埋め（削除一括）(I)...</div>
<svg class="a" style="left:259px;top:378.9px" width="16" height="16" viewBox="0 0 16 16"><polygon points="4,1 15,1 12,7 1,7" fill="#f4f5f8" stroke="#8c929c" stroke-width="0.7"/><path d="M2.5 4.0H13.5M9.5 1L6.5 7M2.5 4.0L9.5 1M6.5 7L13.5 4.0" stroke="#8c929c" stroke-width="0.55"/><polygon points="4,9 15,9 12,15 1,15" fill="#f4f5f8" stroke="#8c929c" stroke-width="0.7"/><path d="M2.5 12.0H13.5M9.5 9L6.5 15M2.5 12.0L9.5 9M6.5 15L13.5 12.0" stroke="#8c929c" stroke-width="0.55"/><circle cx="8" cy="4" r="2.2" fill="#ffd36a" stroke="#f0a020" stroke-width="0.5"/><path d="M6 7.5h4l-2 2z" fill="#111"/><rect x="11.5" y="11" width="4" height="4" fill="#f4c62b"/></svg>
<div class="t" style="left:285.5px;top:403.12px;font-size:8.8px;--w:94.75px;color:#222;transform:scaleX(0.9469)">穴埋め（曲面使用）(S)...</div>
<svg class="a" style="left:259px;top:400.7px" width="16" height="16" viewBox="0 0 16 16"><polygon points="4,1 15,1 12,7 1,7" fill="#f4f5f8" stroke="#8c929c" stroke-width="0.7"/><path d="M2.5 4.0H13.5M9.5 1L6.5 7M2.5 4.0L9.5 1M6.5 7L13.5 4.0" stroke="#8c929c" stroke-width="0.55"/><polygon points="4,9 15,9 12,15 1,15" fill="#f4f5f8" stroke="#8c929c" stroke-width="0.7"/><path d="M2.5 12.0H13.5M9.5 9L6.5 15M2.5 12.0L9.5 9M6.5 15L13.5 12.0" stroke="#8c929c" stroke-width="0.55"/><circle cx="8" cy="4" r="2.2" fill="#ffd36a" stroke="#f0a020" stroke-width="0.5"/><path d="M6 7.5h4l-2 2z" fill="#111"/></svg>
<div class="t" style="left:285.5px;top:425.62px;font-size:8.8px;--w:51.2px;color:#222;transform:scaleX(0.9217)">切欠埋め(N)...</div>
<svg class="a" style="left:259px;top:423.2px" width="16" height="16" viewBox="0 0 16 16"><rect x="1" y="1" width="14" height="6" fill="#f6f6f8" stroke="#8c929c" stroke-width="0.7"/><path d="M1 1l7 4 7-4" stroke="#8c929c" stroke-width="0.6" fill="none"/><rect x="1" y="9" width="14" height="6" fill="#f6f6f8" stroke="#8c929c" stroke-width="0.7"/><path d="M1 15l7-4 7 4" stroke="#8c929c" stroke-width="0.6" fill="none"/><path d="M6 7h4l-2 2z" fill="#111"/><path d="M5 14l3-3 3 3z" fill="none" stroke="#e0425a" stroke-width="0.9"/></svg>
<div class="a" style="left:284.5px;top:443px;width:124.5px;height:1px;background:#c8cbd8"></div>
<div class="t" style="left:285.5px;top:450.12px;font-size:8.8px;--w:57.84px;color:#222;transform:scaleX(0.7761)">スムージング(M)...</div>
<svg class="a" style="left:259px;top:447.7px" width="16" height="16" viewBox="0 0 16 16"><polygon points="5,1 15,1 12,6 2,6" fill="#f4f5f8" stroke="#8c929c" stroke-width="0.7"/><path d="M3.5 3.5H13.5M10.0 1L7.0 6M3.5 3.5L10.0 1M7.0 6L13.5 3.5" stroke="#8c929c" stroke-width="0.55"/><polygon points="4,10 14,10 11,15 1,15" fill="#f4f5f8" stroke="#8c929c" stroke-width="0.7"/><path d="M2.5 12.5H12.5M9.0 10L6.0 15M2.5 12.5L9.0 10M6.0 15L12.5 12.5" stroke="#8c929c" stroke-width="0.55"/><path d="M6 6.5h4l-2 2.5z" fill="#111"/><path d="M3 4h10" stroke="#8c929c" stroke-width="0.5"/></svg>
<div class="a" style="left:284.5px;top:467px;width:124.5px;height:1px;background:#c8cbd8"></div>
<div class="t" style="left:285.5px;top:474.32px;font-size:8.8px;--w:42.86px;color:#222;transform:scaleX(0.911)">間引き(O)...</div>
<svg class="a" style="left:259px;top:471.9px" width="16" height="16" viewBox="0 0 16 16"><polygon points="5,1 15,1 12,7 2,7" fill="#f4f5f8" stroke="#8c929c" stroke-width="0.7"/><path d="M3.5 4.0H13.5M10.0 1L7.0 7M3.5 4.0L10.0 1M7.0 7L13.5 4.0" stroke="#8c929c" stroke-width="0.55"/><polygon points="4,10 15,10 12,15 1,15" fill="#f4f5f8" stroke="#8c929c" stroke-width="0.7"/><path d="M6 7h4l-2 2.5z" fill="#111"/></svg>
<div class="t" style="left:285.5px;top:496.32px;font-size:8.8px;--w:44.78px;color:#222;transform:scaleX(0.962)">細分化(U)...</div>
<svg class="a" style="left:259px;top:493.9px" width="16" height="16" viewBox="0 0 16 16"><polygon points="4,1 15,1 12,7 1,7" fill="#f4f5f8" stroke="#8c929c" stroke-width="0.7"/><polygon points="4,10 14,10 11,15 1,15" fill="#f4f5f8" stroke="#8c929c" stroke-width="0.7"/><path d="M2.5 12.5H12.5M9.0 10L6.0 15M2.5 12.5L9.0 10M6.0 15L12.5 12.5" stroke="#8c929c" stroke-width="0.55"/><path d="M6 7h4l-2 2.5z" fill="#111"/></svg>
<div class="a" style="left:284.5px;top:514px;width:124.5px;height:1px;background:#c8cbd8"></div>
<div class="t" style="left:285.5px;top:521.22px;font-size:8.8px;--w:48.43px;color:#222;transform:scaleX(0.7617)">オフセット(T)...</div>
<svg class="a" style="left:259px;top:518.8px" width="16" height="16" viewBox="0 0 16 16"><path d="M2 3c6 0 11 4 12 10" stroke="#e0425a" stroke-width="1.1" fill="none"/><path d="M2 6c3 1 5 4 6 8" stroke="#111" stroke-width="0.8" stroke-dasharray="1 1" fill="none"/><rect x="1.0" y="2.0" width="2.0" height="2.0" fill="#111"/><rect x="13.0" y="12.0" width="2.0" height="2.0" fill="#111"/><rect x="1.0" y="6.0" width="2.0" height="2.0" fill="#111"/><rect x="8.0" y="13.0" width="2.0" height="2.0" fill="#111"/><path d="M6 9l3 2-1 1" stroke="#111" stroke-width="0.8" fill="none"/></svg>
<div class="a" style="left:284.5px;top:538px;width:124.5px;height:1px;background:#c8cbd8"></div>
<div class="t" style="left:285.5px;top:545.72px;font-size:8.8px;--w:52.73px;color:#222;transform:scaleX(0.8357)">ラップ修正(L)...</div>
<svg class="a" style="left:259px;top:543.3px" width="16" height="16" viewBox="0 0 16 16"><polygon points="5,1 15,1 12,6 2,6" fill="#f4f5f8" stroke="#8c929c" stroke-width="0.7"/><path d="M3.5 3.5H13.5M10.0 1L7.0 6M3.5 3.5L10.0 1M7.0 6L13.5 3.5" stroke="#8c929c" stroke-width="0.55"/><polygon points="4,10 15,10 12,15 1,15" fill="#f4f5f8" stroke="#8c929c" stroke-width="0.7"/><path d="M6 6.5h4l-2 2.5z" fill="#111"/></svg>
<div class="a" style="left:284.5px;top:563px;width:124.5px;height:1px;background:#c8cbd8"></div>
<div class="t" style="left:285.5px;top:570.32px;font-size:8.8px;--w:57.84px;color:#222;transform:scaleX(0.7761)">ミラーコピー(M)...</div>
<svg class="a" style="left:259px;top:567.9px" width="16" height="16" viewBox="0 0 16 16"><polygon points="2.0,5 7.5,5 6.0,15 0.5,15" fill="#f4f5f8" stroke="#9aa0a8" stroke-width="0.7"/><path d="M1.25 10.0H6.75M4.75 5L3.25 15M1.25 10.0L4.75 5M3.25 15L6.75 10.0" stroke="#9aa0a8" stroke-width="0.55"/><polygon points="10.0,5 15.5,5 14.0,15 8.5,15" fill="#f4f5f8" stroke="#9aa0a8" stroke-width="0.7"/><path d="M9.25 10.0H14.75M12.75 5L11.25 15M9.25 10.0L12.75 5M11.25 15L14.75 10.0" stroke="#9aa0a8" stroke-width="0.55"/><path d="M8 4v12" stroke="#c040c0" stroke-width="0.8" stroke-dasharray="1 0.8"/><path d="M4 4c2-3 6-3 9-1" stroke="#333" stroke-width="0.9" fill="none"/><rect x="11.9" y="1.9" width="2.2" height="2.2" fill="#111"/></svg>
<div class="a" style="left:284.5px;top:587px;width:124.5px;height:1px;background:#c8cbd8"></div>
<div class="t" style="left:285.5px;top:593.42px;font-size:8.8px;--w:63.83px;color:#222;transform:scaleX(0.971)">曲率自動更新(A)</div>
<div class="a" style="left:434.2px;top:117.3px;width:48.6px;height:24.2px;background:#e8ebf8"></div>
<div class="t" style="left:439.1px;top:122.72px;font-size:11.8px;--w:39.0px;color:#1a1a1a;transform:scaleX(0.9656)">曲線(C)</div>
<div class="a" style="left:434.2px;top:141.5px;width:193.0px;height:496.5px;background:#f0f0f0"></div>
<div class="a" style="left:434.2px;top:141.5px;width:21.6px;height:496.5px;background:linear-gradient(90deg,#f3f5fb,#e4e7f1 55%,#d6dae7);border-right:1px solid #c6c9d8"></div>
<div class="t" style="left:462px;top:149.44px;font-size:8.1px;--w:62.13px;color:#222;transform:scaleX(0.9958)">自動頂点挿入(I)...</div>
<svg class="a" style="left:437.2px;top:145.7px" width="16" height="16" viewBox="0 0 16 16"><text x="0.5" y="5.5" font-family="Liberation Sans" font-size="5.6" font-weight="bold" fill="#111" textLength="15" lengthAdjust="spacingAndGlyphs">AUTO</text><path d="M2 8c4 0 8 2 11 7" stroke="#3b9a6c" stroke-width="1" fill="none"/><rect x="1.0" y="7.0" width="2.0" height="2.0" fill="#111"/><rect x="6.5" y="8.5" width="2" height="2" fill="#e0203a"/><rect x="12.0" y="14.0" width="2.0" height="2.0" fill="#111"/></svg>
<div class="t" style="left:462px;top:170.14px;font-size:8.1px;--w:65.1px;color:#222;transform:scaleX(0.9932)">自動曲線編集(E)...</div>
<svg class="a" style="left:437.2px;top:166.4px" width="16" height="16" viewBox="0 0 16 16"><text x="0.5" y="5.5" font-family="Liberation Sans" font-size="5.6" font-weight="bold" fill="#111" textLength="15" lengthAdjust="spacingAndGlyphs">AUTO</text><path d="M1 9c3-2 5 2 8 0s4-2 6-1M1 14c3-2 5 2 8 0s4-2 6-1" stroke="#3b9a6c" stroke-width="1" fill="none"/><path d="M6 10h4l-2 2z" fill="#111"/><rect x="0.7" y="8.2" width="1.6" height="1.6" fill="#111"/><rect x="14.2" y="7.2" width="1.6" height="1.6" fill="#111"/><rect x="0.7" y="13.2" width="1.6" height="1.6" fill="#111"/><rect x="14.2" y="12.2" width="1.6" height="1.6" fill="#111"/></svg>
<div class="a" style="left:461px;top:185px;width:166.2px;height:1px;background:#c8cbd8"></div>
<div class="t" style="left:462px;top:192.04px;font-size:8.1px;--w:63.82px;color:#222;transform:scaleX(0.9943)">投影属性設定(J)...</div>
<svg class="a" style="left:437.2px;top:188.3px" width="16" height="16" viewBox="0 0 16 16"><path d="M2 14c0-6 4-11 11-12" stroke="#2f6cc8" stroke-width="1.1" fill="none"/><path d="M2 14c3 0 5-1 6-3s2-2 5-3" stroke="#3b9a6c" stroke-width="0.9" fill="none"/><rect x="1.0" y="13.0" width="2.0" height="2.0" fill="#111"/><rect x="12.0" y="1.0" width="2.0" height="2.0" fill="#111"/><circle cx="12" cy="12" r="3.6" fill="none" stroke="#8a8a92" stroke-width="1.4" stroke-dasharray="1.1 0.9"/><circle cx="12" cy="12" r="3.0" fill="#cfcfd4" stroke="#7a7a82" stroke-width="0.6"/><circle cx="12" cy="12" r="1.35" fill="#f4f4f4" stroke="#888" stroke-width="0.4"/></svg>
<div class="t" style="left:462px;top:212.84px;font-size:8.1px;--w:59.17px;color:#222;transform:scaleX(0.9986)">法線属性設定(N)</div>
<svg class="a" style="left:437.2px;top:209.1px" width="16" height="16" viewBox="0 0 16 16"><path d="M1 8c3-1 6-2 9-1" stroke="#333" stroke-width="0.8" fill="none"/><path d="M6 10c1-4 3-6 6-7" stroke="#3b9a6c" stroke-width="0.9" fill="none"/><rect x="6.0" y="7.0" width="2.0" height="2.0" fill="#111"/><circle cx="11.5" cy="12" r="3.6" fill="none" stroke="#8a8a92" stroke-width="1.4" stroke-dasharray="1.1 0.9"/><circle cx="11.5" cy="12" r="3.0" fill="#cfcfd4" stroke="#7a7a82" stroke-width="0.6"/><circle cx="11.5" cy="12" r="1.35" fill="#f4f4f4" stroke="#888" stroke-width="0.4"/><path d="M11 2l2 1.5" stroke="#999" stroke-width="0.6"/></svg>
<div class="t" style="left:462px;top:232.94px;font-size:8.1px;--w:84.26px;color:#222;transform:scaleX(0.9948)">法線属性設定（G0）(0)</div>
<svg class="a" style="left:437.2px;top:229.2px" width="16" height="16" viewBox="0 0 16 16"><text x="0.5" y="5" font-family="Liberation Sans" font-size="5" font-weight="bold" fill="#222">G0</text><path d="M1 8c3-1 6-2 9-1" stroke="#333" stroke-width="0.8" fill="none"/><path d="M6 10c1-4 3-6 6-7" stroke="#3b9a6c" stroke-width="0.9" fill="none"/><rect x="6.0" y="7.0" width="2.0" height="2.0" fill="#111"/><circle cx="11.5" cy="12" r="3.6" fill="none" stroke="#8a8a92" stroke-width="1.4" stroke-dasharray="1.1 0.9"/><circle cx="11.5" cy="12" r="3.0" fill="#cfcfd4" stroke="#7a7a82" stroke-width="0.6"/><circle cx="11.5" cy="12" r="1.35" fill="#f4f4f4" stroke="#888" stroke-width="0.4"/><path d="M11 2l2 1.5" stroke="#999" stroke-width="0.6"/></svg>
<div class="a" style="left:461px;top:248px;width:166.2px;height:1px;background:#c8cbd8"></div>
<div class="t" style="left:462px;top:256.14px;font-size:8.1px;--w:67.05px;color:#222;transform:scaleX(0.9063)">フリー曲線作成(C)...</div>
<svg class="a" style="left:437.2px;top:252.4px" width="16" height="16" viewBox="0 0 16 16"><path d="M2 14C2 8 6 3 13 2" stroke="#e2508c" stroke-width="1.1" fill="none"/><rect x="1.0" y="13.0" width="2.0" height="2.0" fill="#111"/><rect x="12.0" y="1.0" width="2.0" height="2.0" fill="#111"/><text x="9" y="16" font-family="Liberation Sans" font-size="10.5" font-weight="bold" fill="#3b9a6c">F</text></svg>
<div class="t" style="left:462px;top:277.34px;font-size:8.1px;--w:58.95px;color:#222;transform:scaleX(0.8934)">フリー円作成(R)...</div>
<svg class="a" style="left:437.2px;top:273.6px" width="16" height="16" viewBox="0 0 16 16"><circle cx="7" cy="7" r="5" stroke="#e2508c" stroke-width="1.1" fill="none"/><rect x="10.0" y="3.0" width="2.0" height="2.0" fill="#111"/><rect x="2.0" y="9.0" width="2.0" height="2.0" fill="#111"/><text x="9" y="16" font-family="Liberation Sans" font-size="10.5" font-weight="bold" fill="#3b9a6c">F</text></svg>
<div class="a" style="left:461px;top:292px;width:166.2px;height:1px;background:#c8cbd8"></div>
<div class="t" style="left:462px;top:299.34px;font-size:8.1px;--w:121.26px;color:#222;transform:scaleX(0.8516)">フリー曲線作成（インナーループ）(I)...</div>
<svg class="a" style="left:437.2px;top:295.6px" width="16" height="16" viewBox="0 0 16 16"><path d="M2 14C2 8 6 3 13 2" stroke="#e2508c" stroke-width="1.1" fill="none"/><rect x="1.0" y="13.0" width="2.0" height="2.0" fill="#111"/><rect x="12.0" y="1.0" width="2.0" height="2.0" fill="#111"/><text x="11" y="16" font-family="Liberation Sans" font-size="10.5" font-weight="bold" fill="#2f6cc8">I</text></svg>
<div class="t" style="left:462px;top:319.54px;font-size:8.1px;--w:116.55px;color:#222;transform:scaleX(0.8447)">フリー円作成（インナーループ）(N)...</div>
<svg class="a" style="left:437.2px;top:315.8px" width="16" height="16" viewBox="0 0 16 16"><circle cx="7" cy="7" r="5" stroke="#e2508c" stroke-width="1.1" fill="none"/><rect x="10.0" y="3.0" width="2.0" height="2.0" fill="#111"/><rect x="2.0" y="9.0" width="2.0" height="2.0" fill="#111"/><text x="11" y="16" font-family="Liberation Sans" font-size="10.5" font-weight="bold" fill="#2f6cc8">I</text></svg>
<div class="a" style="left:461px;top:335px;width:166.2px;height:1px;background:#c8cbd8"></div>
<div class="t" style="left:462px;top:341.74px;font-size:8.1px;--w:89.23px;color:#222;transform:scaleX(0.8454)">ポリゴンエッジ曲線作成(P)...</div>
<svg class="a" style="left:437.2px;top:338px" width="16" height="16" viewBox="0 0 16 16"><path d="M2 6h12l-2 8H4z" fill="#eef0f4" stroke="#8c929c" stroke-width="0.7"/><path d="M2 6l6 8 6-8M5 14l3-4 3 4" stroke="#8c929c" stroke-width="0.5" fill="none"/><path d="M3 9c3 2 7 2 10 0" stroke="#e2508c" stroke-width="0.9" fill="none"/><path d="M2 1l1 2M8 0.5v2M14 1l-1 2" stroke="#444" stroke-width="0.6"/></svg>
<div class="a" style="left:461px;top:357px;width:166.2px;height:1px;background:#c8cbd8"></div>
<div class="t" style="left:462px;top:365.94px;font-size:8.1px;--w:48.9px;color:#222;transform:scaleX(0.9869)">頂点編集(V)...</div>
<svg class="a" style="left:437.2px;top:362.2px" width="16" height="16" viewBox="0 0 16 16"><path d="M2 14c2-6 9-3 12-11" stroke="#3b9a6c" stroke-width="1" fill="none"/><rect x="1.0" y="13.0" width="2.0" height="2.0" fill="#111"/><rect x="13.0" y="2.0" width="2.0" height="2.0" fill="#111"/><rect x="6.9" y="7.4" width="2.2" height="2.2" fill="#e0203a"/><path d="M8 3v2M8 12v2M7 4l1-1 1 1M7 13l1 1 1-1" stroke="#222" stroke-width="0.7" fill="none"/><path d="M1 5l2-1M13 12l2 1" stroke="#999" stroke-width="0.6"/></svg>
<div class="t" style="left:462px;top:385.94px;font-size:8.1px;--w:49.32px;color:#222;transform:scaleX(0.9867)">曲線編集(U)...</div>
<svg class="a" style="left:437.2px;top:382.2px" width="16" height="16" viewBox="0 0 16 16"><path d="M2 14c2-6 9-3 12-11" stroke="#e2508c" stroke-width="1.1" fill="none"/><rect x="1.0" y="13.0" width="2.0" height="2.0" fill="#111"/><rect x="13.0" y="2.0" width="2.0" height="2.0" fill="#111"/><rect x="6.9" y="7.4" width="2.2" height="2.2" fill="#ff2090"/><path d="M1 4l2-1M13 12l2 1" stroke="#999" stroke-width="0.6"/></svg>
<div class="t" style="left:462px;top:406.74px;font-size:8.1px;--w:56.15px;color:#222;transform:scaleX(0.9913)">制御点編集(L)...</div>
<svg class="a" style="left:437.2px;top:403px" width="16" height="16" viewBox="0 0 16 16"><path d="M1 14C2 8 6 4 13 3" stroke="#f8d020" stroke-width="1" stroke-dasharray="1.5 1" fill="none"/><path d="M5 15c1-5 4-8 9-9" stroke="#3b9a6c" stroke-width="1" fill="none"/><rect x="0.3999999999999999" y="12.9" width="2.2" height="2.2" fill="#f8d020"/><rect x="2.9" y="5.9" width="2.2" height="2.2" fill="#f8d020"/><rect x="7.9" y="2.4" width="2.2" height="2.2" fill="#f8d020"/><path d="M1 3l2-1M13 12l2 1" stroke="#999" stroke-width="0.6"/></svg>
<div class="a" style="left:461px;top:421px;width:166.2px;height:1px;background:#c8cbd8"></div>
<div class="t" style="left:462px;top:428.94px;font-size:8.1px;--w:45.93px;color:#222;transform:scaleX(0.9901)">曲線挿入(I)...</div>
<svg class="a" style="left:437.2px;top:425.2px" width="16" height="16" viewBox="0 0 16 16"><path d="M2 14C3 8 7 3 14 3" stroke="#3b9a6c" stroke-width="1.1" fill="none"/><rect x="1.0" y="13.0" width="2.0" height="2.0" fill="#111"/><rect x="13.0" y="2.0" width="2.0" height="2.0" fill="#111"/><path d="M1 4l1.5 1M3 2l0.5 1.5M5 3l-1 1" stroke="#444" stroke-width="0.6"/></svg>
<div class="a" style="left:461px;top:444px;width:166.2px;height:1px;background:#c8cbd8"></div>
<div class="t" style="left:462px;top:452.24px;font-size:8.1px;--w:47.62px;color:#222;transform:scaleX(0.9882)">曲線投影(J)...</div>
<svg class="a" style="left:437.2px;top:448.5px" width="16" height="16" viewBox="0 0 16 16"><path d="M2 14C2 8 6 3 13 2" stroke="#2f6cc8" stroke-width="1" fill="none"/><path d="M2 14c4 0 5-2 7-3l-1-2 3-1-1-2 3-4" stroke="#3b9a6c" stroke-width="0.9" fill="none"/><rect x="1.0" y="13.0" width="2.0" height="2.0" fill="#111"/><rect x="12.0" y="1.0" width="2.0" height="2.0" fill="#111"/></svg>
<div class="a" style="left:461px;top:467px;width:166.2px;height:1px;background:#c8cbd8"></div>
<div class="t" style="left:462px;top:474.44px;font-size:8.1px;--w:49.32px;color:#222;transform:scaleX(0.9867)">頂点削除(R)...</div>
<svg class="a" style="left:437.2px;top:470.7px" width="16" height="16" viewBox="0 0 16 16"><path d="M1 11c3-4 8-4 13-9" stroke="#3b9a6c" stroke-width="1" fill="none"/><rect x="5.4" y="6.9" width="2.2" height="2.2" fill="#e0203a"/><path d="M9.4 9.4L14.6 14.6M14.6 9.4L9.4 14.6" stroke="#e23a4e" stroke-width="2.2" stroke-linecap="round"/></svg>
<div class="t" style="left:462px;top:495.44px;font-size:8.1px;--w:64.67px;color:#222;transform:scaleX(0.9935)">微小曲線削除(T)...</div>
<svg class="a" style="left:437.2px;top:491.7px" width="16" height="16" viewBox="0 0 16 16"><path d="M1 7c3 2 6 2 8-1M5 10l2-3" stroke="#3b9a6c" stroke-width="0.9" fill="none"/><path d="M4 9l7-6" stroke="#e0203a" stroke-width="1.1"/><rect x="3.0" y="8.0" width="2.0" height="2.0" fill="#111"/><rect x="10.0" y="2.0" width="2.0" height="2.0" fill="#111"/><path d="M9.4 9.4L14.6 14.6M14.6 9.4L9.4 14.6" stroke="#e23a4e" stroke-width="2.2" stroke-linecap="round"/></svg>
<div class="t" style="left:462px;top:515.84px;font-size:8.1px;--w:49.74px;color:#222;transform:scaleX(0.9862)">曲線削除(O)...</div>
<svg class="a" style="left:437.2px;top:512.1px" width="16" height="16" viewBox="0 0 16 16"><path d="M2 14C3 8 7 3 14 3" stroke="#3b9a6c" stroke-width="1.1" fill="none"/><rect x="1.0" y="13.0" width="2.0" height="2.0" fill="#111"/><rect x="13.0" y="2.0" width="2.0" height="2.0" fill="#111"/><path d="M9.4 9.4L14.6 14.6M14.6 9.4L9.4 14.6" stroke="#e23a4e" stroke-width="2.2" stroke-linecap="round"/></svg>
<div class="a" style="left:461px;top:530px;width:166.2px;height:1px;background:#c8cbd8"></div>
<div class="t" style="left:462px;top:537.94px;font-size:8.1px;--w:124.75px;color:#222;transform:scaleX(1.0005)">曲線連続性設定（曲線-曲線）(C)...</div>
<svg class="a" style="left:437.2px;top:534.2px" width="16" height="16" viewBox="0 0 16 16"><path d="M1 2c3 3 5 6 6 6M1 13c3-4 8-6 14-11" stroke="#3b9a6c" stroke-width="1" fill="none"/><rect x="5.0" y="7.0" width="2.0" height="2.0" fill="#111"/><circle cx="12" cy="12" r="3.6" fill="none" stroke="#8a8a92" stroke-width="1.4" stroke-dasharray="1.1 0.9"/><circle cx="12" cy="12" r="3.0" fill="#cfcfd4" stroke="#7a7a82" stroke-width="0.6"/><circle cx="12" cy="12" r="1.35" fill="#f4f4f4" stroke="#888" stroke-width="0.4"/><path d="M8 3l2-1M2 10l2 1" stroke="#999" stroke-width="0.6"/></svg>
<div class="t" style="left:462px;top:558.24px;font-size:8.1px;--w:117.99px;color:#222;transform:scaleX(1.0043)">曲線連続性設定（曲線-曲面）(S)</div>
<svg class="a" style="left:437.2px;top:554.5px" width="16" height="16" viewBox="0 0 16 16"><path d="M1 10l4-4 5 1 1 6-9 2z" fill="#4aa0e0" stroke="#2a6fb0" stroke-width="0.5"/><path d="M6 6c2-1 5-4 9-5" stroke="#3b9a6c" stroke-width="1" fill="none"/><rect x="5.0" y="5.0" width="2.0" height="2.0" fill="#111"/><circle cx="12" cy="12" r="3.6" fill="none" stroke="#8a8a92" stroke-width="1.4" stroke-dasharray="1.1 0.9"/><circle cx="12" cy="12" r="3.0" fill="#cfcfd4" stroke="#7a7a82" stroke-width="0.6"/><circle cx="12" cy="12" r="1.35" fill="#f4f4f4" stroke="#888" stroke-width="0.4"/><path d="M8 2l2-1" stroke="#999" stroke-width="0.6"/></svg>
<div class="t" style="left:462px;top:579.04px;font-size:8.1px;--w:140.53px;color:#222;transform:scaleX(1.0021)">自動曲線連続性設定（曲線-曲線）(A)...</div>
<svg class="a" style="left:437.2px;top:575.3px" width="16" height="16" viewBox="0 0 16 16"><text x="0.5" y="5" font-family="Liberation Sans" font-size="5.6" font-weight="bold" fill="#111" textLength="15" lengthAdjust="spacingAndGlyphs">AUTO</text><path d="M1 13c3-3 8-5 14-7M2 7c2 1 4 2 6 2" stroke="#3b9a6c" stroke-width="1" fill="none"/><rect x="6.0" y="7.5" width="2.0" height="2.0" fill="#111"/><circle cx="12" cy="12" r="3.6" fill="none" stroke="#8a8a92" stroke-width="1.4" stroke-dasharray="1.1 0.9"/><circle cx="12" cy="12" r="3.0" fill="#cfcfd4" stroke="#7a7a82" stroke-width="0.6"/><circle cx="12" cy="12" r="1.35" fill="#f4f4f4" stroke="#888" stroke-width="0.4"/></svg>
<div class="a" style="left:461px;top:594px;width:166.2px;height:1px;background:#c8cbd8"></div>
<div class="t" style="left:462px;top:601.54px;font-size:8.1px;--w:40.8px;color:#222;transform:scaleX(0.982)">直線化(K)...</div>
<svg class="a" style="left:437.2px;top:597.8px" width="16" height="16" viewBox="0 0 16 16"><path d="M2 14L14 3" stroke="#3b9a6c" stroke-width="1.1"/><rect x="1.0" y="13.0" width="2.0" height="2.0" fill="#111"/><rect x="13.0" y="2.0" width="2.0" height="2.0" fill="#111"/></svg>
<div class="t" style="left:462px;top:621.84px;font-size:8.1px;--w:39.95px;color:#222;transform:scaleX(0.983)">円弧化(L)...</div>
<svg class="a" style="left:437.2px;top:618.1px" width="16" height="16" viewBox="0 0 16 16"><path d="M12 3C6 0 1 5 3 11c1 3 4 4 5 4" stroke="#3b9a6c" stroke-width="1.1" fill="none"/><rect x="11.0" y="3.0" width="2.0" height="2.0" fill="#111"/><rect x="7.0" y="13.5" width="2.0" height="2.0" fill="#111"/></svg>
<div class="a" style="left:662px;top:119.4px;width:49px;height:22.1px;background:#e8ebf8"></div>
<div class="t" style="left:668.9px;top:124.52px;font-size:11.8px;--w:38.39px;color:#1a1a1a;transform:scaleX(0.9662)">曲面(S)</div>
<div class="a" style="left:662px;top:141.5px;width:141.5px;height:522.5px;background:#f0f0f0"></div>
<div class="a" style="left:662px;top:141.5px;width:21.5px;height:522.5px;background:linear-gradient(90deg,#f3f5fb,#e4e7f1 55%,#d6dae7);border-right:1px solid #c6c9d8"></div>
<div class="t" style="left:690px;top:148.64px;font-size:8.1px;--w:16.69px;color:#222;transform:scaleX(0.6954)">パッチ</div>
<svg class="a" style="left:791px;top:148.4px" width="5" height="9" viewBox="0 0 5 9"><path d="M0 0L5 4.5L0 9z" fill="#111"/></svg>
<div class="a" style="left:689px;top:164px;width:114.5px;height:1px;background:#c8cbd8"></div>
<div class="t" style="left:690px;top:172.34px;font-size:8.1px;--w:65.1px;color:#222;transform:scaleX(0.9932)">自動曲面作成(A)...</div>
<svg class="a" style="left:665px;top:168.6px" width="16" height="16" viewBox="0 0 16 16"><text x="0.5" y="4.6" font-family="Liberation Sans" font-size="5.6" font-weight="bold" fill="#111" textLength="15" lengthAdjust="spacingAndGlyphs">AUTO</text><polygon points="0.5,10.0 9.799999999999999,5.5 16.0,10.5 6.7,15.5" fill="#2f6fe0" stroke="#1f4fb0" stroke-width="0.6"/><path d="M3.6,8.6 L11.35,13.9 M6.7,7.1 L13.83,12.100000000000001" stroke="#9ccaff" stroke-width="1.1"/><path d="M5.1499999999999995,11.7 L12.9,8.0" stroke="#6aa8f8" stroke-width="0.7"/><path d="M0 7l1.2-1M2.5 5.2l0.3-1.5M3.5 7.8l1.5-0.4" stroke="#333" stroke-width="0.6"/><path d="M12 15l1.2-1M14.5 13.2l0.3-1.5M15.5 15.8l1.5-0.4" stroke="#333" stroke-width="0.6"/></svg>
<div class="t" style="left:690px;top:192.94px;font-size:8.1px;--w:64.25px;color:#222;transform:scaleX(0.994)">複数曲面作成(L)...</div>
<svg class="a" style="left:665px;top:189.2px" width="16" height="16" viewBox="0 0 16 16"><polygon points="0.5,10.05 9.5,6 15.5,10.5 6.5,15" fill="#2a60c0" stroke="#1f4fb0" stroke-width="0.6"/><path d="M3.5,8.79 L11.0,13.559999999999999 M6.5,7.4399999999999995 L13.4,11.940000000000001" stroke="#e8f0ff" stroke-width="1.1"/><path d="M5.0,11.58 L12.5,8.25" stroke="#6aa8f8" stroke-width="0.7"/><polygon points="0.5,7.05 9.5,3 15.5,7.5 6.5,12" fill="#2f6fe0" stroke="#1f4fb0" stroke-width="0.6"/><path d="M3.5,5.79 L11.0,10.559999999999999 M6.5,4.4399999999999995 L13.4,8.940000000000001" stroke="#9ccaff" stroke-width="1.1"/><path d="M5.0,8.58 L12.5,5.25" stroke="#6aa8f8" stroke-width="0.7"/><path d="M1 2.5l1.2-1M3.5 0.7l0.3-1.5M4.5 3.3l1.5-0.4" stroke="#333" stroke-width="0.6"/><path d="M12 15l1.2-1M14.5 13.2l0.3-1.5M15.5 15.8l1.5-0.4" stroke="#333" stroke-width="0.6"/></svg>
<div class="t" style="left:690px;top:213.34px;font-size:8.1px;--w:90.99px;color:#222;transform:scaleX(0.8658)">複数プリミティブ面作成(T)...</div>
<svg class="a" style="left:665px;top:209.6px" width="16" height="16" viewBox="0 0 16 16"><path d="M2 7c0-3 12-3 12 0v6c0 2-12 2-12 0z" fill="#2a60c0" stroke="#1b4aa0" stroke-width="0.5"/><path d="M5 6v8M8 5v10M11 6v8M2 10h12" stroke="#6aa6f0" stroke-width="0.7"/><path d="M1 2.5l1.2-1M3.5 0.7l0.3-1.5M4.5 3.3l1.5-0.4" stroke="#333" stroke-width="0.6"/></svg>
<div class="a" style="left:689px;top:229px;width:114.5px;height:1px;background:#c8cbd8"></div>
<div class="t" style="left:690px;top:237.34px;font-size:8.1px;--w:49.32px;color:#222;transform:scaleX(0.9867)">曲面作成(C)...</div>
<svg class="a" style="left:665px;top:233.6px" width="16" height="16" viewBox="0 0 16 16"><polygon points="0.5,8.0 9.799999999999999,3.5 16.0,8.5 6.7,13.5" fill="#2f6fe0" stroke="#1f4fb0" stroke-width="0.6"/><path d="M3.6,6.6 L11.35,11.9 M6.7,5.1 L13.83,10.100000000000001" stroke="#9ccaff" stroke-width="1.1"/><path d="M5.1499999999999995,9.7 L12.9,6.0" stroke="#6aa8f8" stroke-width="0.7"/><path d="M0 2.5l1.2-1M2.5 0.7l0.3-1.5M3.5 3.3l1.5-0.4" stroke="#333" stroke-width="0.6"/><path d="M12 14.5l1.2-1M14.5 12.7l0.3-1.5M15.5 15.3l1.5-0.4" stroke="#333" stroke-width="0.6"/></svg>
<div class="t" style="left:690px;top:257.24px;font-size:8.1px;--w:75.22px;color:#222;transform:scaleX(0.84)">プリミティブ面作成(P)...</div>
<svg class="a" style="left:665px;top:253.5px" width="16" height="16" viewBox="0 0 16 16"><rect x="1" y="2.44" width="8" height="6.12" fill="#2a60c0" stroke="#1b4aa0" stroke-width="0.5"/><ellipse cx="5.0" cy="8.56" rx="4.0" ry="1.44" fill="#2a60c0" stroke="#1b4aa0" stroke-width="0.5"/><ellipse cx="5.0" cy="2.44" rx="4.0" ry="1.44" fill="#9fd4f7" stroke="#1b4aa0" stroke-width="0.5"/><rect x="7" y="7.4399999999999995" width="8" height="6.12" fill="#2a60c0" stroke="#1b4aa0" stroke-width="0.5"/><ellipse cx="11.0" cy="13.56" rx="4.0" ry="1.44" fill="#2a60c0" stroke="#1b4aa0" stroke-width="0.5"/><ellipse cx="11.0" cy="7.4399999999999995" rx="4.0" ry="1.44" fill="#9fd4f7" stroke="#1b4aa0" stroke-width="0.5"/><path d="M12 2l1.2-1M14.5 0.2l0.3-1.5M15.5 2.8l1.5-0.4" stroke="#333" stroke-width="0.6"/></svg>
<div class="t" style="left:690px;top:277.64px;font-size:8.1px;--w:65.29px;color:#222;transform:scaleX(0.8329)">フィレット面作成(I)...</div>
<svg class="a" style="left:665px;top:273.9px" width="16" height="16" viewBox="0 0 16 16"><path d="M1 6c6-3 12 0 13 9h-4c0-5-4-6-9-5z" fill="#2a6ad0" stroke="#1b4aa0" stroke-width="0.5"/><path d="M2 8c5-2 9 0 10 7" stroke="#7ab4f4" stroke-width="0.8" fill="none"/><path d="M12 2l1.2-1M14.5 0.2l0.3-1.5M15.5 2.8l1.5-0.4" stroke="#333" stroke-width="0.6"/></svg>
<div class="a" style="left:689px;top:294px;width:114.5px;height:1px;background:#c8cbd8"></div>
<div class="t" style="left:690px;top:301.24px;font-size:8.1px;--w:89.95px;color:#222;transform:scaleX(0.87)">R指定フィレット面作成(E)...</div>
<svg class="a" style="left:665px;top:297.5px" width="16" height="16" viewBox="0 0 16 16"><path d="M1 6c6-3 12 0 13 9h-4c0-5-4-6-9-5z" fill="#2a6ad0" stroke="#1b4aa0" stroke-width="0.5"/><path d="M2 8c5-2 9 0 10 7" stroke="#7ab4f4" stroke-width="0.8" fill="none"/><path d="M12 2l1.2-1M14.5 0.2l0.3-1.5M15.5 2.8l1.5-0.4" stroke="#333" stroke-width="0.6"/><text x="0" y="15.5" font-family="Liberation Sans" font-size="7" font-weight="bold" fill="#222">R</text></svg>
<div class="t" style="left:690px;top:322.34px;font-size:8.1px;--w:58.53px;color:#222;transform:scaleX(0.8929)">ぼかし面作成(B)...</div>
<svg class="a" style="left:665px;top:318.6px" width="16" height="16" viewBox="0 0 16 16"><path d="M1 9l7-5 7 5-2 6H3z" fill="#2a6ad0" stroke="#1b4aa0" stroke-width="0.5"/><path d="M4 9h8M8 5v10" stroke="#7ab4f4" stroke-width="0.8"/><path d="M3 2l1 1.5M8 0.5v2M13 2l-1 1.5" stroke="#333" stroke-width="0.6"/></svg>
<div class="a" style="left:689px;top:337px;width:114.5px;height:1px;background:#c8cbd8"></div>
<div class="t" style="left:690px;top:345.14px;font-size:8.1px;--w:54.81px;color:#222;transform:scaleX(0.9524)">自動角出し(A)...</div>
<svg class="a" style="left:665px;top:341.4px" width="16" height="16" viewBox="0 0 16 16"><text x="0.5" y="5" font-family="Liberation Sans" font-size="5.6" font-weight="bold" fill="#111" textLength="15" lengthAdjust="spacingAndGlyphs">AUTO</text><path d="M2 10l8-4 5 2-5 3v5l-3 1v-5z" fill="#2a6ad0" stroke="#1b4aa0" stroke-width="0.5"/><path d="M3 10l7-3.5" stroke="#7ab4f4" stroke-width="0.8"/><path d="M12 7l1.2-1M14.5 5.2l0.3-1.5M15.5 7.8l1.5-0.4" stroke="#333" stroke-width="0.6"/></svg>
<div class="t" style="left:690px;top:366.64px;font-size:8.1px;--w:38.61px;color:#222;transform:scaleX(0.9293)">角出し(E)...</div>
<svg class="a" style="left:665px;top:362.9px" width="16" height="16" viewBox="0 0 16 16"><path d="M1 7l8-5 6 3-6 4v6l-4 2V9z" fill="#2a6ad0" stroke="#1b4aa0" stroke-width="0.5"/><path d="M2 7l7-4.5" stroke="#7ab4f4" stroke-width="0.8"/><path d="M12 3l1.2-1M14.5 1.2l0.3-1.5M15.5 3.8l1.5-0.4" stroke="#333" stroke-width="0.6"/></svg>
<div class="t" style="left:690px;top:387.34px;font-size:8.1px;--w:56.35px;color:#222;transform:scaleX(0.8597)">ぼかし角出し(P)...</div>
<svg class="a" style="left:665px;top:383.6px" width="16" height="16" viewBox="0 0 16 16"><path d="M1 5l4-3h9v9l-4 4H1z" fill="#2a60c0" stroke="#1b4aa0" stroke-width="0.5"/><path d="M4 5v10M7 5v10M1 8h9M1 11h9M10 5v10M1 5h9l4-3" stroke="#7ab4f4" stroke-width="0.6" fill="none"/><path d="M12 2l1.2-1M14.5 0.2l0.3-1.5M15.5 2.8l1.5-0.4" stroke="#333" stroke-width="0.6"/></svg>
<div class="a" style="left:689px;top:403px;width:114.5px;height:1px;background:#c8cbd8"></div>
<div class="t" style="left:690px;top:409.94px;font-size:8.1px;--w:28.31px;color:#222;transform:scaleX(0.8031)">コピー(C)</div>
<svg class="a" style="left:791px;top:409.7px" width="5" height="9" viewBox="0 0 5 9"><path d="M0 0L5 4.5L0 9z" fill="#111"/></svg>
<div class="a" style="left:689px;top:425px;width:114.5px;height:1px;background:#c8cbd8"></div>
<div class="t" style="left:690px;top:433.54px;font-size:8.1px;--w:49.32px;color:#222;transform:scaleX(0.9867)">曲面削除(R)...</div>
<svg class="a" style="left:665px;top:429.8px" width="16" height="16" viewBox="0 0 16 16"><polygon points="0,5.5 9.299999999999999,1 15.5,6.0 6.2,11" fill="#2f6fe0" stroke="#1f4fb0" stroke-width="0.6"/><path d="M3.1,4.1 L10.85,9.4 M6.2,2.6 L13.33,7.6000000000000005" stroke="#9ccaff" stroke-width="1.1"/><path d="M4.6499999999999995,7.2 L12.4,3.5" stroke="#6aa8f8" stroke-width="0.7"/><path d="M10.1 10.1L14.9 14.9M14.9 10.1L10.1 14.9" stroke="#e23a4e" stroke-width="2.2" stroke-linecap="round"/></svg>
<div class="t" style="left:690px;top:454.14px;font-size:8.1px;--w:53.81px;color:#222;transform:scaleX(0.8267)">曲面フィット(F)...</div>
<svg class="a" style="left:665px;top:450.4px" width="16" height="16" viewBox="0 0 16 16"><path d="M5 1c3 0 7 1 8 2l-6 4c-1-1-3-2-5-2z" fill="#3a7ad8"/><path d="M6 7h4l-2 2z" fill="#111"/><polygon points="1,14 6,10 15,10 10,14" fill="#3a7ad8" stroke="#1b4aa0" stroke-width="0.5"/></svg>
<div class="t" style="left:690px;top:474.54px;font-size:8.1px;--w:57.0px;color:#222;transform:scaleX(0.9905)">母曲面延長(E)...</div>
<svg class="a" style="left:665px;top:470.8px" width="16" height="16" viewBox="0 0 16 16"><polygon points="0,11 9,3 16,5 7,14" fill="#d8f020" stroke="#88a010" stroke-width="0.5"/><polygon points="3,10 9,5 13,6 7,11" fill="#2a6ad0"/><rect x="0.09999999999999998" y="13.1" width="1.8" height="1.8" fill="#111"/><rect x="14.1" y="1.1" width="1.8" height="1.8" fill="#111"/><path d="M1 14l2-2M15 2l-2 2" stroke="#111" stroke-width="0.6"/></svg>
<div class="t" style="left:690px;top:496.24px;font-size:8.1px;--w:57.84px;color:#222;transform:scaleX(0.9898)">曲面最適化(O)...</div>
<svg class="a" style="left:665px;top:492.5px" width="16" height="16" viewBox="0 0 16 16"><polygon points="1,7.6 9.4,4 15,8.0 6.6000000000000005,12" fill="#2f6fe0" stroke="#1f4fb0" stroke-width="0.6"/><path d="M3.8000000000000003,6.48 L10.799999999999999,10.719999999999999 M6.6000000000000005,5.28 L13.04,9.280000000000001" stroke="#9ccaff" stroke-width="1.1"/><path d="M5.2,8.96 L12.200000000000001,6.0" stroke="#6aa8f8" stroke-width="0.7"/><path d="M1 2l2 1M2 1l2 1M12 14l2 1M13 13l2 1" stroke="#777" stroke-width="0.6"/></svg>
<div class="t" style="left:690px;top:516.64px;font-size:8.1px;--w:57.0px;color:#222;transform:scaleX(0.9905)">制御点編集(E)...</div>
<svg class="a" style="left:665px;top:512.9px" width="16" height="16" viewBox="0 0 16 16"><path d="M1 8c2-4 6-6 11-6" stroke="#f8d020" stroke-width="1" stroke-dasharray="1.5 1" fill="none"/><path d="M2 9c2-4 6-5 10-5" stroke="#e05090" stroke-width="0.8" fill="none"/><polygon points="4,9.6 10.6,6 15,10.0 8.4,14" fill="#2f6fe0" stroke="#1f4fb0" stroke-width="0.6"/><path d="M6.2,8.48 L11.7,12.719999999999999 M8.4,7.28 L13.459999999999999,11.280000000000001" stroke="#9ccaff" stroke-width="1.1"/><path d="M7.3,10.96 L12.8,8.0" stroke="#6aa8f8" stroke-width="0.7"/><path d="M1 1l2 1M13 13l2 1" stroke="#777" stroke-width="0.6"/></svg>
<div class="t" style="left:690px;top:537.04px;font-size:8.1px;--w:49.32px;color:#222;transform:scaleX(0.9867)">曲面分割(D)...</div>
<svg class="a" style="left:665px;top:533.3px" width="16" height="16" viewBox="0 0 16 16"><polygon points="0,5.05 9.0,1 15,5.5 6.0,10" fill="#2f6fe0" stroke="#1f4fb0" stroke-width="0.6"/><path d="M3.0,3.79 L10.5,8.559999999999999 M6.0,2.44 L12.9,6.94" stroke="#9ccaff" stroke-width="1.1"/><path d="M4.5,6.58 L12.0,3.25" stroke="#6aa8f8" stroke-width="0.7"/><path d="M12 9v7M8.5 12.5h7" stroke="#777" stroke-width="1.6"/><path d="M5 3l6 4" stroke="#e05070" stroke-width="0.6"/></svg>
<div class="a" style="left:689px;top:552px;width:114.5px;height:1px;background:#c8cbd8"></div>
<div class="t" style="left:690px;top:560.24px;font-size:8.1px;--w:73.62px;color:#222;transform:scaleX(0.9951)">曲面連続性設定(U)...</div>
<div class="a" style="left:689px;top:576px;width:114.5px;height:1px;background:#c8cbd8"></div>
<div class="t" style="left:690px;top:583.44px;font-size:8.1px;--w:72.55px;color:#222;transform:scaleX(0.8897)">無効ポリゴン設定(V)...</div>
<svg class="a" style="left:665px;top:579.7px" width="16" height="16" viewBox="0 0 16 16"><polygon points="3,3 14,3 11,11 0,11" fill="#f4f5f8" stroke="#8c929c" stroke-width="0.7"/><path d="M1.5 7.0H12.5M8.5 3L5.5 11M1.5 7.0L8.5 3M5.5 11L12.5 7.0" stroke="#8c929c" stroke-width="0.55"/><path d="M2.7 1.7L5.3 4.3M5.3 1.7L2.7 4.3" stroke="#e23a4e" stroke-width="0.9" stroke-linecap="round"/><path d="M7.7 1.7L10.3 4.3M10.3 1.7L7.7 4.3" stroke="#e23a4e" stroke-width="0.9" stroke-linecap="round"/><path d="M3.7 7.7L6.3 10.3M6.3 7.7L3.7 10.3" stroke="#e23a4e" stroke-width="0.9" stroke-linecap="round"/><circle cx="12" cy="12" r="3.0" fill="none" stroke="#8a8a92" stroke-width="1.4" stroke-dasharray="1.1 0.9"/><circle cx="12" cy="12" r="2.4" fill="#cfcfd4" stroke="#7a7a82" stroke-width="0.6"/><circle cx="12" cy="12" r="1.08" fill="#f4f4f4" stroke="#888" stroke-width="0.4"/></svg>
<div class="a" style="left:689px;top:599px;width:114.5px;height:1px;background:#c8cbd8"></div>
<div class="t" style="left:690px;top:606.44px;font-size:8.1px;--w:48.9px;color:#222;transform:scaleX(0.9869)">曲面結合(S)...</div>
<div class="t" style="left:690px;top:627.24px;font-size:8.1px;--w:69.24px;color:#222;transform:scaleX(0.9359)">曲面方向合わせ(D)...</div>
<div class="a" style="left:689px;top:642px;width:114.5px;height:1px;background:#c8cbd8"></div>
<div class="t" style="left:690px;top:650.24px;font-size:8.1px;--w:29.15px;color:#222;transform:scaleX(0.8066)">ミラー(M)</div>
<svg class="a" style="left:791px;top:650.0px" width="5" height="9" viewBox="0 0 5 9"><path d="M0 0L5 4.5L0 9z" fill="#111"/></svg>
<div class="a" style="left:854px;top:119.8px;width:56.6px;height:22.2px;background:#e8ebf8"></div>
<div class="t" style="left:863.4px;top:124.46px;font-size:11.9px;--w:38.71px;color:#1a1a1a;transform:scaleX(0.9712)">解析(A)</div>
<div class="a" style="left:854px;top:142px;width:140.6px;height:496.3px;background:#f0f0f0"></div>
<div class="a" style="left:854px;top:142px;width:21.6px;height:496.3px;background:linear-gradient(90deg,#f3f5fb,#e4e7f1 55%,#d6dae7);border-right:1px solid #c6c9d8"></div>
<div class="t" style="left:882.2px;top:149.44px;font-size:8.1px;--w:34.45px;color:#222;transform:scaleX(0.99)">制御点(P)</div>
<svg class="a" style="left:857px;top:145.7px" width="16" height="16" viewBox="0 0 16 16"><path d="M1 14C2 7 7 3 14 2" stroke="#f080c0" stroke-width="1.2" stroke-dasharray="2 1" fill="none"/><path d="M5 15c1-5 4-8 9-9" stroke="#6080c0" stroke-width="1.2" fill="none"/><rect x="0.19999999999999996" y="12.2" width="2.6" height="2.6" fill="#f8e020"/><rect x="2.7" y="5.7" width="2.6" height="2.6" fill="#f8e020"/><rect x="7.2" y="2.2" width="2.6" height="2.6" fill="#f8e020"/><rect x="12.2" y="0.7" width="2.6" height="2.6" fill="#f8e020"/></svg>
<div class="a" style="left:881.2px;top:165px;width:113.4px;height:1px;background:#c8cbd8"></div>
<div class="t" style="left:882.2px;top:171.64px;font-size:8.1px;--w:62.32px;color:#222;transform:scaleX(0.7685)">ゼブラマッピング(Z)...</div>
<svg class="a" style="left:857px;top:167.9px" width="16" height="16" viewBox="0 0 16 16"><path d="M1 7c3-2 9-3 14-1l-1 5c-5-2-10-1-13 1z" fill="#3a8ad8" stroke="#1b5aa8" stroke-width="0.6"/><path d="M4 6l-1 5M7 5.5l-1 5M10 5.5l-1 5M13 6l-1 4.5" stroke="#e8f4ff" stroke-width="0.9"/></svg>
<div class="a" style="left:881.2px;top:187px;width:113.4px;height:1px;background:#c8cbd8"></div>
<div class="t" style="left:882.2px;top:194.54px;font-size:8.1px;--w:50.0px;color:#222;transform:scaleX(0.8504)">スケール表示(S)</div>
<svg class="a" style="left:857px;top:190.8px" width="16" height="16" viewBox="0 0 16 16"><path d="M2 9c0-5 12-5 12 0z" fill="#fff" stroke="#555" stroke-width="0.9"/><path d="M8 9l2-4M4 6l1 1M8 4v1M12 6l-1 1" stroke="#555" stroke-width="0.7"/><rect x="1" y="11" width="14" height="3.5" fill="#fff" stroke="#555" stroke-width="0.8"/><path d="M3 11v2M5 11v1.5M7 11v2M9 11v1.5M11 11v2M13 11v1.5" stroke="#555" stroke-width="0.5"/></svg>
<div class="a" style="left:881.2px;top:210px;width:113.4px;height:1px;background:#c8cbd8"></div>
<div class="t" style="left:882.2px;top:217.34px;font-size:8.1px;--w:72.97px;color:#222;transform:scaleX(0.89)">曲率（ポリゴン）(U)...</div>
<svg class="a" style="left:857px;top:213.6px" width="16" height="16" viewBox="0 0 16 16"><defs><linearGradient id="rbg" x1="0" y1="0" x2="0.3" y2="1"><stop offset="0" stop-color="#e83020"/><stop offset="0.35" stop-color="#f0c020"/><stop offset="0.6" stop-color="#40c060"/><stop offset="1" stop-color="#2060e0"/></linearGradient></defs><path d="M2 3c3-1 6-2 8-1 1 3 2 7 5 10-3 1-6 2-8 2C5 10 4 6 2 3z" fill="url(#rbg)" stroke="#b04020" stroke-width="0.4"/></svg>
<div class="t" style="left:882.2px;top:237.74px;font-size:8.1px;--w:87.9px;color:#222;transform:scaleX(0.9096)">曲率（ポリゴン）複数(L)...</div>
<div class="t" style="left:882.2px;top:258.34px;font-size:8.1px;--w:65.52px;color:#222;transform:scaleX(0.993)">曲率（曲線）(C)...</div>
<svg class="a" style="left:857px;top:254.6px" width="16" height="16" viewBox="0 0 16 16"><path d="M1 13c4-1 9-4 14-8" stroke="#3b9a6c" stroke-width="1" fill="none"/><path d="M3 12.5l-2-3M6 11.5l-1-4M9 10l1-4M12 8l2-3M14 6l2-1" stroke="#3b9a6c" stroke-width="0.6"/></svg>
<div class="t" style="left:882.2px;top:279.04px;font-size:8.1px;--w:65.1px;color:#222;transform:scaleX(0.9932)">曲率（曲面）(V)...</div>
<svg class="a" style="left:857px;top:275.3px" width="16" height="16" viewBox="0 0 16 16"><defs><linearGradient id="rbg" x1="0" y1="0" x2="0.3" y2="1"><stop offset="0" stop-color="#e83020"/><stop offset="0.35" stop-color="#f0c020"/><stop offset="0.6" stop-color="#40c060"/><stop offset="1" stop-color="#2060e0"/></linearGradient></defs><path d="M2 3c3-1 6-2 8-1 1 3 2 7 5 10-3 1-6 2-8 2C5 10 4 6 2 3z" fill="url(#rbg)" stroke="#b04020" stroke-width="0.4"/></svg>
<div class="t" style="left:882.2px;top:299.64px;font-size:8.1px;--w:72.77px;color:#222;transform:scaleX(0.9956)">曲率（断面線）(T)...</div>
<svg class="a" style="left:857px;top:295.9px" width="16" height="16" viewBox="0 0 16 16"><path d="M3 1l9 3v9l-9-3z" fill="#eef0f8" stroke="#6a6aa0" stroke-width="0.7"/><path d="M5 5l5 2M5 8l5 2" stroke="#b06080" stroke-width="0.5"/><polygon points="1,11 8,7 15,10 8,15" fill="#2a6ad0" stroke="#1b4aa0" stroke-width="0.5"/><path d="M13 7l2 2-2 2" fill="#2a6ad0"/></svg>
<div class="t" style="left:882.2px;top:320.04px;font-size:8.1px;--w:81.72px;color:#222;transform:scaleX(0.9968)">曲率半径（曲面）(D)...</div>
<svg class="a" style="left:857px;top:316.3px" width="16" height="16" viewBox="0 0 16 16"><rect x="9" y="1" width="6" height="4" fill="#f4e0b0" stroke="#a08040" stroke-width="0.6"/><path d="M1 11c4-3 9-3 14 0l-2 4c-3-2-7-2-11 0z" fill="#2a6ad0"/><path d="M6 9V3M6 9l-4 2" stroke="#e03030" stroke-width="1"/><path d="M6 9l4 1" stroke="#30a030" stroke-width="1"/><rect x="5.1" y="2.1" width="1.8" height="1.8" fill="#e03030"/></svg>
<div class="a" style="left:881.2px;top:335px;width:113.4px;height:1px;background:#c8cbd8"></div>
<div class="t" style="left:882.2px;top:342.24px;font-size:8.1px;--w:27.19px;color:#222;transform:scaleX(0.982)">勾配(G)</div>
<svg class="a" style="left:980px;top:342.0px" width="5" height="9" viewBox="0 0 5 9"><path d="M0 0L5 4.5L0 9z" fill="#111"/></svg>
<div class="a" style="left:881.2px;top:358px;width:113.4px;height:1px;background:#c8cbd8"></div>
<div class="t" style="left:882.2px;top:364.84px;font-size:8.1px;--w:26.77px;color:#222;transform:scaleX(0.9824)">距離(D)</div>
<svg class="a" style="left:980px;top:364.6px" width="5" height="9" viewBox="0 0 5 9"><path d="M0 0L5 4.5L0 9z" fill="#111"/></svg>
<div class="a" style="left:881.2px;top:380px;width:113.4px;height:1px;background:#c8cbd8"></div>
<div class="t" style="left:882.2px;top:387.74px;font-size:8.1px;--w:26.35px;color:#222;transform:scaleX(0.9833)">角度(A)</div>
<svg class="a" style="left:980px;top:387.5px" width="5" height="9" viewBox="0 0 5 9"><path d="M0 0L5 4.5L0 9z" fill="#111"/></svg>
<div class="a" style="left:881.2px;top:403px;width:113.4px;height:1px;background:#c8cbd8"></div>
<div class="t" style="left:882.2px;top:409.84px;font-size:8.1px;--w:66.2px;color:#222;transform:scaleX(0.8851)">外周（ポリゴン）(B)</div>
<svg class="a" style="left:857px;top:406.1px" width="16" height="16" viewBox="0 0 16 16"><polygon points="2,3 15,3 13,13 0,13" fill="#fff0f4" stroke="#e05a80" stroke-width="0.9" stroke-dasharray="1.4 0.8"/><circle cx="8" cy="8" r="2.5" fill="none" stroke="#e05a80" stroke-width="0.8"/><path d="M4 11l8-6" stroke="#e05a80" stroke-width="0.5"/></svg>
<div class="t" style="left:882.2px;top:430.54px;font-size:8.1px;--w:66.85px;color:#222;transform:scaleX(1.0008)">外周（曲面群）(S)</div>
<svg class="a" style="left:857px;top:426.8px" width="16" height="16" viewBox="0 0 16 16"><polygon points="0,9 8,3 16,7 8,13" fill="#e83a80" stroke="#a02050" stroke-width="0.5"/><circle cx="8" cy="8" r="2" fill="#fff"/><circle cx="8" cy="8" r="1" fill="#3a7ad8"/></svg>
<div class="a" style="left:881.2px;top:446px;width:113.4px;height:1px;background:#c8cbd8"></div>
<div class="t" style="left:882.2px;top:453.44px;font-size:8.1px;--w:74.52px;color:#222;transform:scaleX(1.0024)">曲面未作成部検出(F)</div>
<svg class="a" style="left:857px;top:449.7px" width="16" height="16" viewBox="0 0 16 16"><path d="M1 8l7-5 7 3-4 7z" fill="#2a6ad0"/><circle cx="9" cy="9" r="3.5" fill="#eaf2ff" stroke="#333" stroke-width="0.9"/><path d="M11.5 11.5l3 3" stroke="#333" stroke-width="1.5"/><path d="M8 9l2-2" stroke="#2a6ad0" stroke-width="0.8"/></svg>
<div class="t" style="left:882.2px;top:473.84px;font-size:8.1px;--w:85.37px;color:#222;transform:scaleX(0.9256)">トリム面/内挿面検出(D)...</div>
<svg class="a" style="left:857px;top:470.1px" width="16" height="16" viewBox="0 0 16 16"><path d="M1 6l7-5 7 3-4 7z" fill="none" stroke="#3a6ad0" stroke-width="1"/><path d="M3 8l5-4 5 2" fill="none" stroke="#3a6ad0" stroke-width="0.8"/><circle cx="9" cy="9" r="3.5" fill="#f4f8ff" stroke="#333" stroke-width="0.9"/><path d="M11.5 11.5l3 3" stroke="#333" stroke-width="1.5"/></svg>
<div class="t" style="left:882.2px;top:494.44px;font-size:8.1px;--w:34.87px;color:#222;transform:scaleX(0.9892)">曲線数(N)</div>
<svg class="a" style="left:857px;top:490.7px" width="16" height="16" viewBox="0 0 16 16"><polygon points="0,8 8,3 16,8 8,13" fill="#2aa080"/><polygon points="4,8 8,5 12,8 8,11" fill="#3a7ad8"/><rect x="4" y="4" width="8" height="8" fill="#fff" stroke="#333" stroke-width="0.7"/><text x="5.5" y="11" font-family="Liberation Sans" font-size="7" font-weight="bold" fill="#111">4</text></svg>
<div class="t" style="left:882.2px;top:515.04px;font-size:8.1px;--w:70.44px;color:#222;transform:scaleX(0.8638)">曲面方向チェック(S)...</div>
<svg class="a" style="left:857px;top:511.3px" width="16" height="16" viewBox="0 0 16 16"><path d="M1 4h8v6c0 3-2 5-5 5H1z" fill="#f4f4f4" stroke="#888" stroke-width="0.7"/><path d="M9 2h5v9c0 3-3 5-6 5H5c3 0 4-2 4-5z" fill="#3a7ad8" stroke="#1b4aa0" stroke-width="0.5"/></svg>
<div class="t" style="left:882.2px;top:535.44px;font-size:8.1px;--w:48.58px;color:#222;transform:scaleX(0.7633)">インナーループ(I)</div>
<svg class="a" style="left:857px;top:531.7px" width="16" height="16" viewBox="0 0 16 16"><polygon points="0,9 9,3 16,6 7,13" fill="#2aa080" stroke="#1a7060" stroke-width="0.5"/><circle cx="6" cy="9" r="1.8" fill="#3a6ad0" stroke="#e05090" stroke-width="0.6"/><circle cx="10.5" cy="7" r="1.8" fill="#3a6ad0" stroke="#e05090" stroke-width="0.6"/></svg>
<div class="a" style="left:881.2px;top:551px;width:113.4px;height:1px;background:#c8cbd8"></div>
<div class="t" style="left:882.2px;top:558.74px;font-size:8.1px;--w:32.7px;color:#222;transform:scaleX(0.9748)">注記(A)...</div>
<svg class="a" style="left:857px;top:555px" width="16" height="16" viewBox="0 0 16 16"><rect x="1" y="1" width="9" height="5" fill="#f4dcaa" stroke="#9a7a40" stroke-width="0.7"/><path d="M3 3.5h5" stroke="#9a7a40" stroke-width="0.5"/><path d="M10 6l2 1" stroke="#777" stroke-width="0.5"/><path d="M12.5 9v6M9.5 12h6" stroke="#2a8ae0" stroke-width="2.2"/></svg>
<div class="t" style="left:882.2px;top:578.94px;font-size:8.1px;--w:42.55px;color:#222;transform:scaleX(0.9942)">注記削除(V)</div>
<svg class="a" style="left:857px;top:575.2px" width="16" height="16" viewBox="0 0 16 16"><rect x="1" y="1" width="9" height="5" fill="#f4dcaa" stroke="#9a7a40" stroke-width="0.7"/><path d="M3 3.5h5" stroke="#9a7a40" stroke-width="0.5"/><path d="M10 6l2 1" stroke="#777" stroke-width="0.5"/><path d="M9.9 9.4L15.1 14.6M15.1 9.4L9.9 14.6" stroke="#e23a4e" stroke-width="2.2" stroke-linecap="round"/></svg>
<div class="a" style="left:881.2px;top:594px;width:113.4px;height:1px;background:#c8cbd8"></div>
<div class="t" style="left:882.2px;top:601.94px;font-size:8.1px;--w:49.74px;color:#222;transform:scaleX(0.9862)">形状情報(G)...</div>
<svg class="a" style="left:857px;top:598.2px" width="16" height="16" viewBox="0 0 16 16"><rect x="1" y="1" width="13" height="9" fill="#e8e8ea" stroke="#888" stroke-width="0.7"/><circle cx="6" cy="11.5" r="3.6" fill="#fff" stroke="#444" stroke-width="0.8"/><path d="M6 10v4M6 8.5v0.5" stroke="#c03030" stroke-width="1.3"/></svg>
<div class="t" style="left:882.2px;top:621.94px;font-size:8.1px;--w:27.19px;color:#222;transform:scaleX(0.982)">体積(O)</div>
<svg class="a" style="left:857px;top:618.2px" width="16" height="16" viewBox="0 0 16 16"><path d="M1 4l5-3 7 2v8l-5 3-7-2z" fill="#3aa0e0"/><path d="M1 4l7 2 5-3M8 6v8" stroke="#bfe4ff" stroke-width="0.6" fill="none"/><circle cx="11.5" cy="11.5" r="3.6" fill="#fff" stroke="#444" stroke-width="0.8"/><path d="M11.5 10v4M11.5 8.5v0.5" stroke="#c03030" stroke-width="1.3"/></svg>
<div class="a" style="left:1027.6px;top:124px;width:50.1px;height:17.6px;background:#e8ebf8"></div>
<div class="t" style="left:1032px;top:126.06px;font-size:11.9px;--w:40.97px;color:#1a1a1a;transform:scaleX(0.79)">パーツ(P)</div>
<div class="a" style="left:1027.6px;top:141.6px;width:152.7px;height:168.4px;background:#f0f0f0"></div>
<div class="a" style="left:1027.6px;top:141.6px;width:21.2px;height:168.4px;background:linear-gradient(90deg,#f3f5fb,#e4e7f1 55%,#d6dae7);border-right:1px solid #c6c9d8"></div>
<div class="t" style="left:1054.5px;top:149.34px;font-size:8.1px;--w:44.94px;color:#222;transform:scaleX(0.8991)">リブ作成(R)...</div>
<svg class="a" style="left:1030.6px;top:145.6px" width="16" height="16" viewBox="0 0 16 16"><path d="M1 9l9-7h5l-2 6-9 7H1z" fill="#4aa8e8" stroke="#2a7fc4" stroke-width="0.5"/><path d="M1 9h4l9-7M5 9v6" stroke="#a8dcfa" stroke-width="0.7" fill="none"/></svg>
<div class="t" style="left:1054.5px;top:169.04px;font-size:8.1px;--w:59.99px;color:#222;transform:scaleX(0.8157)">ボス・ピン作成(B)...</div>
<svg class="a" style="left:1030.6px;top:165.3px" width="16" height="16" viewBox="0 0 16 16"><rect x="3" y="2.8" width="10" height="10.4" fill="#4fa8e6" stroke="#2a7fc4" stroke-width="0.5"/><ellipse cx="8.0" cy="13.2" rx="5.0" ry="1.7999999999999998" fill="#4fa8e6" stroke="#2a7fc4" stroke-width="0.5"/><ellipse cx="8.0" cy="2.8" rx="5.0" ry="1.7999999999999998" fill="#9fd4f7" stroke="#2a7fc4" stroke-width="0.5"/></svg>
<div class="a" style="left:1053.5px;top:183px;width:126.8px;height:1px;background:#c8cbd8"></div>
<div class="t" style="left:1054.5px;top:190.14px;font-size:8.1px;--w:90.16px;color:#222;transform:scaleX(0.8797)">リブ作成（2点ピック）(C)...</div>
<svg class="a" style="left:1030.6px;top:186.4px" width="16" height="16" viewBox="0 0 16 16"><path d="M1 9l9-7h5l-2 6-9 7H1z" fill="#4aa8e8" stroke="#2a7fc4" stroke-width="0.5"/><path d="M1 9h4l9-7M5 9v6" stroke="#a8dcfa" stroke-width="0.7" fill="none"/><path d="M9 9h2v3h1v-2h1v2h1v-1h1v5h-6z" fill="#f8d890" stroke="#b08040" stroke-width="0.5"/></svg>
<div class="t" style="left:1054.5px;top:210.94px;font-size:8.1px;--w:105.21px;color:#222;transform:scaleX(0.8347)">ボス・ピン作成（2点ピック）(P)...</div>
<svg class="a" style="left:1030.6px;top:207.2px" width="16" height="16" viewBox="0 0 16 16"><rect x="2" y="2.62" width="9" height="9.76" fill="#4fa8e6" stroke="#2a7fc4" stroke-width="0.5"/><ellipse cx="6.5" cy="12.38" rx="4.5" ry="1.6199999999999999" fill="#4fa8e6" stroke="#2a7fc4" stroke-width="0.5"/><ellipse cx="6.5" cy="2.62" rx="4.5" ry="1.6199999999999999" fill="#9fd4f7" stroke="#2a7fc4" stroke-width="0.5"/><path d="M9 9h2v3h1v-2h1v2h1v-1h1v5h-6z" fill="#f8d890" stroke="#b08040" stroke-width="0.5"/></svg>
<div class="a" style="left:1053.5px;top:225px;width:126.8px;height:1px;background:#c8cbd8"></div>
<div class="t" style="left:1054.5px;top:232.34px;font-size:8.1px;--w:46.7px;color:#222;transform:scaleX(0.9112)">方向合わせ(D)</div>
<svg class="a" style="left:1030.6px;top:228.6px" width="16" height="16" viewBox="0 0 16 16"><rect x="0" y="8.26" width="7" height="5.48" fill="#4fa8e6" stroke="#2a7fc4" stroke-width="0.5"/><ellipse cx="3.5" cy="13.74" rx="3.5" ry="1.26" fill="#4fa8e6" stroke="#2a7fc4" stroke-width="0.5"/><ellipse cx="3.5" cy="8.26" rx="3.5" ry="1.26" fill="#9fd4f7" stroke="#2a7fc4" stroke-width="0.5"/><rect x="9" y="8.26" width="7" height="5.48" fill="#4fa8e6" stroke="#2a7fc4" stroke-width="0.5"/><ellipse cx="12.5" cy="13.74" rx="3.5" ry="1.26" fill="#4fa8e6" stroke="#2a7fc4" stroke-width="0.5"/><ellipse cx="12.5" cy="8.26" rx="3.5" ry="1.26" fill="#9fd4f7" stroke="#2a7fc4" stroke-width="0.5"/><rect x="4.5" y="9.26" width="7" height="5.48" fill="#4fa8e6" stroke="#2a7fc4" stroke-width="0.5"/><ellipse cx="8.0" cy="14.74" rx="3.5" ry="1.26" fill="#4fa8e6" stroke="#2a7fc4" stroke-width="0.5"/><ellipse cx="8.0" cy="9.26" rx="3.5" ry="1.26" fill="#9fd4f7" stroke="#2a7fc4" stroke-width="0.5"/><path d="M3 1v6M8 1v6M13 1v6" stroke="#e03030" stroke-width="1"/><rect x="2" y="1" width="2" height="2" fill="#e03030"/><rect x="7" y="1" width="2" height="2" fill="#e03030"/><rect x="12" y="1" width="2" height="2" fill="#e03030"/></svg>
<div class="t" style="left:1054.5px;top:252.44px;font-size:8.1px;--w:76.06px;color:#222;transform:scaleX(0.9237)">高さ合わせ（上面）(T)</div>
<svg class="a" style="left:1030.6px;top:248.7px" width="16" height="16" viewBox="0 0 16 16"><rect x="0" y="2.26" width="7" height="12.48" fill="#4fa8e6" stroke="#2a7fc4" stroke-width="0.5"/><ellipse cx="3.5" cy="14.74" rx="3.5" ry="1.26" fill="#4fa8e6" stroke="#2a7fc4" stroke-width="0.5"/><ellipse cx="3.5" cy="2.26" rx="3.5" ry="1.26" fill="#9fd4f7" stroke="#2a7fc4" stroke-width="0.5"/><rect x="9" y="2.26" width="7" height="12.48" fill="#4fa8e6" stroke="#2a7fc4" stroke-width="0.5"/><ellipse cx="12.5" cy="14.74" rx="3.5" ry="1.26" fill="#4fa8e6" stroke="#2a7fc4" stroke-width="0.5"/><ellipse cx="12.5" cy="2.26" rx="3.5" ry="1.26" fill="#9fd4f7" stroke="#2a7fc4" stroke-width="0.5"/><path d="M12.5 4v5" stroke="#e03030" stroke-width="1.2"/><rect x="10" y="7" width="5" height="2" fill="#fff"/><rect x="11.5" y="3" width="2" height="2" fill="#e03030"/></svg>
<div class="t" style="left:1054.5px;top:272.54px;font-size:8.1px;--w:77.33px;color:#222;transform:scaleX(0.924)">高さ合わせ（底面）(O)</div>
<svg class="a" style="left:1030.6px;top:268.8px" width="16" height="16" viewBox="0 0 16 16"><rect x="0" y="2.26" width="7" height="12.48" fill="#4fa8e6" stroke="#2a7fc4" stroke-width="0.5"/><ellipse cx="3.5" cy="14.74" rx="3.5" ry="1.26" fill="#4fa8e6" stroke="#2a7fc4" stroke-width="0.5"/><ellipse cx="3.5" cy="2.26" rx="3.5" ry="1.26" fill="#9fd4f7" stroke="#2a7fc4" stroke-width="0.5"/><rect x="9" y="2.26" width="7" height="12.48" fill="#4fa8e6" stroke="#2a7fc4" stroke-width="0.5"/><ellipse cx="12.5" cy="14.74" rx="3.5" ry="1.26" fill="#4fa8e6" stroke="#2a7fc4" stroke-width="0.5"/><ellipse cx="12.5" cy="2.26" rx="3.5" ry="1.26" fill="#9fd4f7" stroke="#2a7fc4" stroke-width="0.5"/><path d="M12.5 8v5" stroke="#e03030" stroke-width="1.2"/><rect x="10" y="8" width="5" height="2" fill="#fff"/><rect x="11.5" y="12" width="2" height="2" fill="#e03030"/></svg>
<div class="a" style="left:1053.5px;top:287px;width:126.8px;height:1px;background:#c8cbd8"></div>
<div class="t" style="left:1054.5px;top:294.34px;font-size:8.1px;--w:26.35px;color:#222;transform:scaleX(0.9833)">削除(E)</div>
<svg class="a" style="left:1030.6px;top:290.6px" width="16" height="16" viewBox="0 0 16 16"><rect x="2" y="2.8" width="10" height="9.4" fill="#4fa8e6" stroke="#2a7fc4" stroke-width="0.5"/><ellipse cx="7.0" cy="12.2" rx="5.0" ry="1.7999999999999998" fill="#4fa8e6" stroke="#2a7fc4" stroke-width="0.5"/><ellipse cx="7.0" cy="2.8" rx="5.0" ry="1.7999999999999998" fill="#9fd4f7" stroke="#2a7fc4" stroke-width="0.5"/><path d="M9.9 9.9L15.1 15.1M15.1 9.9L9.9 15.1" stroke="#e23a4e" stroke-width="2.2" stroke-linecap="round"/></svg>
<script>
(function(){var L=document.querySelectorAll('.t');for(var i=0;i<L.length;i++){var e=L[i];var w=parseFloat(getComputedStyle(e).getPropertyValue('--w'));e.style.transform='none';var a=e.getBoundingClientRect().width;if(w>0&&a>0){e.style.transform='scaleX('+(w/a).toFixed(4)+')';}}})();
</script>
</body></html>
